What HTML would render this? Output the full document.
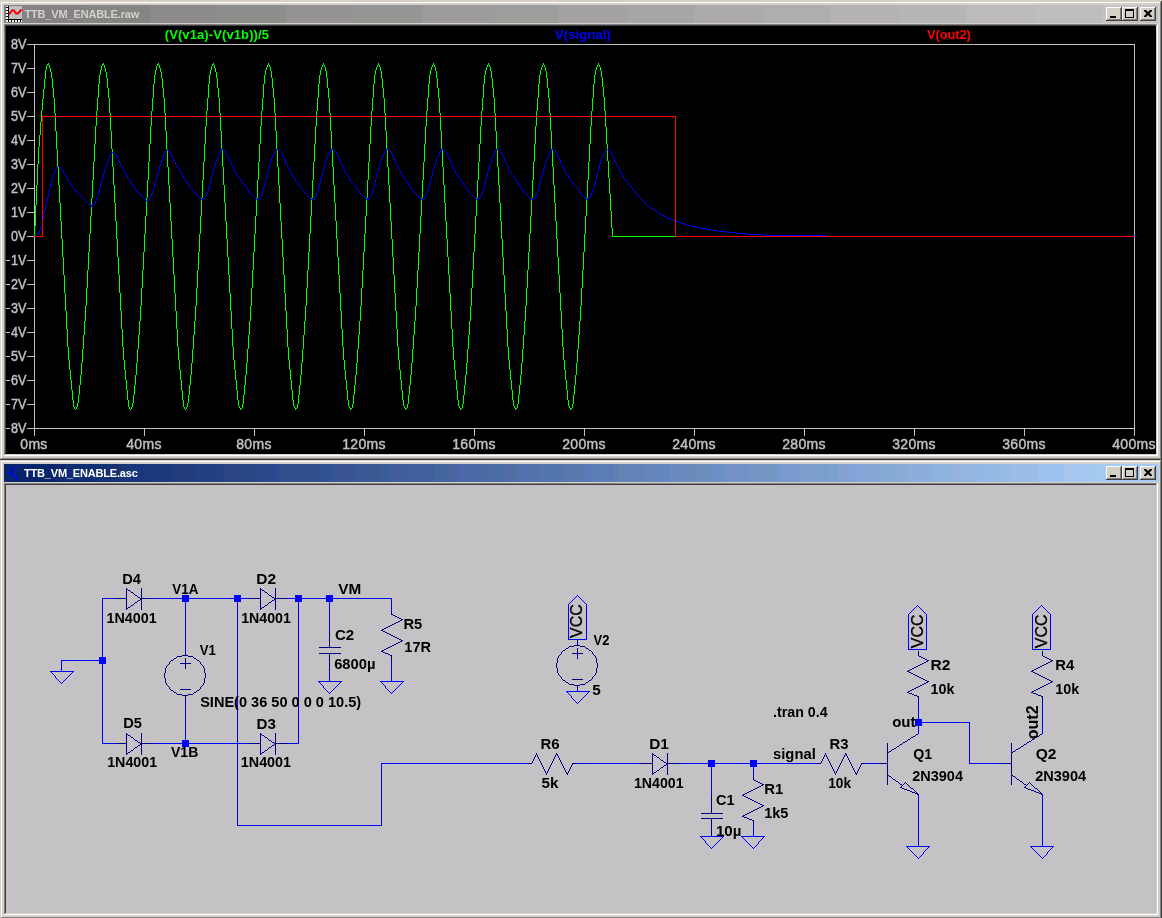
<!DOCTYPE html><html><head><meta charset="utf-8"><title>LTspice</title><style>
*{margin:0;padding:0}
html,body{width:1162px;height:918px;overflow:hidden;background:#d4d0c8;font-family:"Liberation Sans",sans-serif}
.abs{position:absolute}
svg{position:absolute;left:0;top:0;will-change:transform}
</style></head><body>
<svg width="1162" height="918" viewBox="0 0 1162 918">
<defs><linearGradient id="gin" x1="0" x2="1" y1="0" y2="0"><stop offset="0" stop-color="#808080"/><stop offset="1" stop-color="#c0c0c0"/></linearGradient><linearGradient id="gac" x1="0" x2="1" y1="0" y2="0"><stop offset="0" stop-color="#0a246a"/><stop offset="1" stop-color="#a6caf0"/></linearGradient><clipPath id="pc"><rect x="6" y="26" width="1150" height="428"/></clipPath></defs>
<rect x="0" y="1" width="1162" height="459" fill="#d4d0c8"/>
<rect x="1" y="2" width="1160" height="1" fill="#ffffff"/>
<rect x="1" y="2" width="1" height="457" fill="#ffffff"/>
<rect x="1" y="458" width="1160" height="1" fill="#808080"/>
<rect x="1160" y="2" width="1" height="457" fill="#808080"/>
<rect x="0" y="459" width="1162" height="1" fill="#404040"/>
<rect x="1161" y="1" width="1" height="459" fill="#404040"/>
<rect x="4" y="5" width="78" height="18" fill="#848284"/>
<rect x="82" y="5" width="68" height="18" fill="#848684"/>
<rect x="150" y="5" width="68" height="18" fill="#8c8a8c"/>
<rect x="218" y="5" width="68" height="18" fill="#8c8e8c"/>
<rect x="286" y="5" width="68" height="18" fill="#949294"/>
<rect x="354" y="5" width="68" height="18" fill="#949694"/>
<rect x="422" y="5" width="68" height="18" fill="#9c9a9c"/>
<rect x="490" y="5" width="68" height="18" fill="#9c9e9c"/>
<rect x="558" y="5" width="69" height="18" fill="#a5a2a5"/>
<rect x="627" y="5" width="68" height="18" fill="#a5a6a5"/>
<rect x="695" y="5" width="68" height="18" fill="#adaaad"/>
<rect x="763" y="5" width="68" height="18" fill="#adaead"/>
<rect x="831" y="5" width="68" height="18" fill="#b5b2b5"/>
<rect x="899" y="5" width="68" height="18" fill="#b5b6b5"/>
<rect x="967" y="5" width="68" height="18" fill="#bdbabd"/>
<rect x="1035" y="5" width="68" height="18" fill="#bdbebd"/>
<rect x="1103" y="5" width="55" height="18" fill="#c5c2c5"/>
<rect x="6" y="6" width="16" height="16" fill="#c0c0c0"/>
<rect x="6" y="6" width="2" height="14" fill="#ffffff"/>
<rect x="6" y="7" width="2" height="1" fill="#000"/>
<rect x="6" y="10" width="2" height="1" fill="#000"/>
<rect x="6" y="13" width="2" height="1" fill="#000"/>
<rect x="6" y="16" width="2" height="1" fill="#000"/>
<rect x="6" y="19" width="2" height="1" fill="#000"/>
<rect x="8" y="6" width="1" height="16" fill="#000"/>
<rect x="6" y="19" width="16" height="1" fill="#000"/>
<rect x="6" y="20" width="16" height="2" fill="#ffffff"/>
<rect x="8" y="20" width="1" height="2" fill="#000"/>
<rect x="11" y="20" width="1" height="2" fill="#000"/>
<rect x="14" y="20" width="1" height="2" fill="#000"/>
<rect x="17" y="20" width="1" height="2" fill="#000"/>
<rect x="20" y="20" width="1" height="2" fill="#000"/>
<polyline points="9,14.5 12,10.5 14,10.5 16,13.5 18,13.5 21.5,9.5" fill="none" stroke="#ff0000" stroke-width="2"/>
<text x="24.4" y="18" font-family="Liberation Sans" font-weight="bold" font-size="11" fill="#d4d0c8" textLength="114.9" lengthAdjust="spacing">TTB_VM_ENABLE.raw</text>
<rect x="1106" y="7" width="16" height="14" fill="#404040"/>
<rect x="1106" y="7" width="15" height="13" fill="#ffffff"/>
<rect x="1107" y="8" width="14" height="12" fill="#808080"/>
<rect x="1107" y="8" width="13" height="11" fill="#d4d0c8"/>
<rect x="1110" y="16" width="6" height="2" fill="#000"/>
<rect x="1122" y="7" width="16" height="14" fill="#404040"/>
<rect x="1122" y="7" width="15" height="13" fill="#ffffff"/>
<rect x="1123" y="8" width="14" height="12" fill="#808080"/>
<rect x="1123" y="8" width="13" height="11" fill="#d4d0c8"/>
<rect x="1125" y="9" width="9" height="9" fill="#000"/>
<rect x="1126" y="11" width="7" height="6" fill="#d4d0c8"/>
<rect x="1140" y="7" width="16" height="14" fill="#404040"/>
<rect x="1140" y="7" width="15" height="13" fill="#ffffff"/>
<rect x="1141" y="8" width="14" height="12" fill="#808080"/>
<rect x="1141" y="8" width="13" height="11" fill="#d4d0c8"/>
<path d="M1144 10h2l2 2l2 -2h2v1l-2.5 2.5l2.5 2.5v1h-2l-2 -2l-2 2h-2v-1l2.5 -2.5l-2.5 -2.5z" fill="#000"/>
<rect x="4" y="24" width="1154" height="432" fill="#ffffff"/>
<rect x="4" y="24" width="1153" height="431" fill="#808080"/>
<rect x="5" y="25" width="1152" height="430" fill="#d4d0c8"/>
<rect x="5" y="25" width="1151" height="429" fill="#404040"/>
<rect x="6" y="26" width="1150" height="428" fill="#000000"/>
<rect x="0" y="460" width="1162" height="459" fill="#d4d0c8"/>
<rect x="1" y="461" width="1160" height="1" fill="#ffffff"/>
<rect x="1" y="461" width="1" height="457" fill="#ffffff"/>
<rect x="1" y="917" width="1160" height="1" fill="#808080"/>
<rect x="1160" y="461" width="1" height="457" fill="#808080"/>
<rect x="0" y="918" width="1162" height="1" fill="#404040"/>
<rect x="1161" y="460" width="1" height="459" fill="#404040"/>
<rect x="4" y="464" width="36" height="18" fill="#08246b"/>
<rect x="40" y="464" width="15" height="18" fill="#08286b"/>
<rect x="55" y="464" width="7" height="18" fill="#10286b"/>
<rect x="62" y="464" width="4" height="18" fill="#102873"/>
<rect x="66" y="464" width="26" height="18" fill="#102d73"/>
<rect x="92" y="464" width="19" height="18" fill="#103173"/>
<rect x="111" y="464" width="8" height="18" fill="#193173"/>
<rect x="119" y="464" width="8" height="18" fill="#193573"/>
<rect x="127" y="464" width="18" height="18" fill="#19357b"/>
<rect x="145" y="464" width="22" height="18" fill="#19397b"/>
<rect x="167" y="464" width="4" height="18" fill="#21397b"/>
<rect x="171" y="464" width="21" height="18" fill="#213d7b"/>
<rect x="192" y="464" width="5" height="18" fill="#213d84"/>
<rect x="197" y="464" width="26" height="18" fill="#214184"/>
<rect x="223" y="464" width="1" height="18" fill="#294184"/>
<rect x="224" y="464" width="26" height="18" fill="#294584"/>
<rect x="250" y="464" width="8" height="18" fill="#294984"/>
<rect x="258" y="464" width="18" height="18" fill="#29498c"/>
<rect x="276" y="464" width="3" height="18" fill="#294d8c"/>
<rect x="279" y="464" width="23" height="18" fill="#314d8c"/>
<rect x="302" y="464" width="21" height="18" fill="#31518c"/>
<rect x="323" y="464" width="6" height="18" fill="#315194"/>
<rect x="329" y="464" width="6" height="18" fill="#315594"/>
<rect x="335" y="464" width="20" height="18" fill="#3a5594"/>
<rect x="355" y="464" width="26" height="18" fill="#3a5994"/>
<rect x="381" y="464" width="7" height="18" fill="#3a5d94"/>
<rect x="388" y="464" width="3" height="18" fill="#3a5d9c"/>
<rect x="391" y="464" width="16" height="18" fill="#425d9c"/>
<rect x="407" y="464" width="27" height="18" fill="#42619c"/>
<rect x="434" y="464" width="13" height="18" fill="#42659c"/>
<rect x="447" y="464" width="6" height="18" fill="#4a659c"/>
<rect x="453" y="464" width="7" height="18" fill="#4a65a5"/>
<rect x="460" y="464" width="26" height="18" fill="#4a69a5"/>
<rect x="486" y="464" width="17" height="18" fill="#4a6da5"/>
<rect x="503" y="464" width="10" height="18" fill="#526da5"/>
<rect x="513" y="464" width="5" height="18" fill="#5271a5"/>
<rect x="518" y="464" width="21" height="18" fill="#5271ad"/>
<rect x="539" y="464" width="19" height="18" fill="#5275ad"/>
<rect x="558" y="464" width="7" height="18" fill="#5a75ad"/>
<rect x="565" y="464" width="18" height="18" fill="#5a79ad"/>
<rect x="583" y="464" width="8" height="18" fill="#5a79b5"/>
<rect x="591" y="464" width="23" height="18" fill="#5a7db5"/>
<rect x="614" y="464" width="4" height="18" fill="#637db5"/>
<rect x="618" y="464" width="26" height="18" fill="#6382b5"/>
<rect x="644" y="464" width="4" height="18" fill="#6386b5"/>
<rect x="648" y="464" width="22" height="18" fill="#6386bd"/>
<rect x="670" y="464" width="26" height="18" fill="#6b8abd"/>
<rect x="696" y="464" width="17" height="18" fill="#6b8ebd"/>
<rect x="713" y="464" width="10" height="18" fill="#6b8ec5"/>
<rect x="723" y="464" width="3" height="18" fill="#6b92c5"/>
<rect x="726" y="464" width="23" height="18" fill="#7392c5"/>
<rect x="749" y="464" width="26" height="18" fill="#7396c5"/>
<rect x="775" y="464" width="3" height="18" fill="#739ac5"/>
<rect x="778" y="464" width="4" height="18" fill="#739ace"/>
<rect x="782" y="464" width="19" height="18" fill="#7b9ace"/>
<rect x="801" y="464" width="27" height="18" fill="#7b9ece"/>
<rect x="828" y="464" width="10" height="18" fill="#7ba2ce"/>
<rect x="838" y="464" width="5" height="18" fill="#84a2ce"/>
<rect x="843" y="464" width="11" height="18" fill="#84a2d6"/>
<rect x="854" y="464" width="26" height="18" fill="#84a6d6"/>
<rect x="880" y="464" width="14" height="18" fill="#84aad6"/>
<rect x="894" y="464" width="13" height="18" fill="#8caad6"/>
<rect x="907" y="464" width="1" height="18" fill="#8caed6"/>
<rect x="908" y="464" width="25" height="18" fill="#8caede"/>
<rect x="933" y="464" width="17" height="18" fill="#8cb2de"/>
<rect x="950" y="464" width="9" height="18" fill="#94b2de"/>
<rect x="959" y="464" width="14" height="18" fill="#94b6de"/>
<rect x="973" y="464" width="12" height="18" fill="#94b6e6"/>
<rect x="985" y="464" width="21" height="18" fill="#94bae6"/>
<rect x="1006" y="464" width="6" height="18" fill="#9cbae6"/>
<rect x="1012" y="464" width="26" height="18" fill="#9cbee6"/>
<rect x="1038" y="464" width="24" height="18" fill="#9cc2ef"/>
<rect x="1062" y="464" width="2" height="18" fill="#a5c2ef"/>
<rect x="1064" y="464" width="26" height="18" fill="#a5c6ef"/>
<rect x="1090" y="464" width="13" height="18" fill="#a5caef"/>
<rect x="1103" y="464" width="55" height="18" fill="#a5caf7"/>
<rect x="11" y="468" width="2" height="9" fill="#0000ff"/>
<rect x="8" y="472" width="3" height="1" fill="#0000ff"/>
<rect x="13" y="469" width="1" height="1" fill="#0000ff"/>
<rect x="14" y="468" width="1" height="1" fill="#0000ff"/>
<rect x="15" y="467" width="1" height="1" fill="#0000ff"/>
<rect x="16" y="466" width="1" height="1" fill="#0000ff"/>
<rect x="17" y="465" width="1" height="1" fill="#0000ff"/>
<rect x="13" y="475" width="1" height="1" fill="#0000ff"/>
<rect x="14" y="476" width="1" height="1" fill="#0000ff"/>
<rect x="15" y="477" width="1" height="1" fill="#0000ff"/>
<rect x="16" y="478" width="1" height="1" fill="#0000ff"/>
<rect x="17" y="479" width="1" height="1" fill="#0000ff"/>
<rect x="18" y="480" width="1" height="1" fill="#0000ff"/>
<rect x="16" y="477" width="2" height="2" fill="#0000ff"/>
<rect x="15" y="478" width="3" height="1" fill="#0000ff"/>
<rect x="17" y="476" width="1" height="3" fill="#0000ff"/>
<text x="24" y="477" font-family="Liberation Sans" font-weight="bold" font-size="11" fill="#ffffff" textLength="113.8" lengthAdjust="spacing">TTB_VM_ENABLE.asc</text>
<rect x="1106" y="466" width="16" height="14" fill="#404040"/>
<rect x="1106" y="466" width="15" height="13" fill="#ffffff"/>
<rect x="1107" y="467" width="14" height="12" fill="#808080"/>
<rect x="1107" y="467" width="13" height="11" fill="#d4d0c8"/>
<rect x="1110" y="475" width="6" height="2" fill="#000"/>
<rect x="1122" y="466" width="16" height="14" fill="#404040"/>
<rect x="1122" y="466" width="15" height="13" fill="#ffffff"/>
<rect x="1123" y="467" width="14" height="12" fill="#808080"/>
<rect x="1123" y="467" width="13" height="11" fill="#d4d0c8"/>
<rect x="1125" y="468" width="9" height="9" fill="#000"/>
<rect x="1126" y="470" width="7" height="6" fill="#d4d0c8"/>
<rect x="1140" y="466" width="16" height="14" fill="#404040"/>
<rect x="1140" y="466" width="15" height="13" fill="#ffffff"/>
<rect x="1141" y="467" width="14" height="12" fill="#808080"/>
<rect x="1141" y="467" width="13" height="11" fill="#d4d0c8"/>
<path d="M1144 469h2l2 2l2 -2h2v1l-2.5 2.5l2.5 2.5v1h-2l-2 -2l-2 2h-2v-1l2.5 -2.5l-2.5 -2.5z" fill="#000"/>
<rect x="4" y="483" width="1154" height="432" fill="#ffffff"/>
<rect x="4" y="483" width="1153" height="431" fill="#808080"/>
<rect x="5" y="484" width="1152" height="430" fill="#d4d0c8"/>
<rect x="5" y="484" width="1151" height="429" fill="#404040"/>
<rect x="6" y="485" width="1150" height="428" fill="#c5c2c5"/>
<g clip-path="url(#pc)">
<g shape-rendering="crispEdges" stroke="#c0c0c0" stroke-width="1" fill="none">
<path d="M27 44.5H1134.5V428.5H27M34.5 44V436"/>
<path d="M27 428.5H34"/>
<path d="M27 404.5H34"/>
<path d="M27 380.5H34"/>
<path d="M27 356.5H34"/>
<path d="M27 332.5H34"/>
<path d="M27 308.5H34"/>
<path d="M27 284.5H34"/>
<path d="M27 260.5H34"/>
<path d="M27 236.5H34"/>
<path d="M27 212.5H34"/>
<path d="M27 188.5H34"/>
<path d="M27 164.5H34"/>
<path d="M27 140.5H34"/>
<path d="M27 116.5H34"/>
<path d="M27 92.5H34"/>
<path d="M27 68.5H34"/>
<path d="M27 44.5H34"/>
<path d="M34.5 428V436"/>
<path d="M144.5 428V436"/>
<path d="M254.5 428V436"/>
<path d="M364.5 428V436"/>
<path d="M474.5 428V436"/>
<path d="M584.5 428V436"/>
<path d="M694.5 428V436"/>
<path d="M804.5 428V436"/>
<path d="M914.5 428V436"/>
<path d="M1024.5 428V436"/>
<path d="M1134.5 428V436"/>
</g>
<g font-family="Liberation Sans" font-size="14" fill="#c0c0c0" stroke="#c0c0c0" stroke-width="0.45">
<text x="26.3" y="433" text-anchor="end" textLength="15.4" lengthAdjust="spacingAndGlyphs">8V</text>
<rect x="6" y="428" width="4" height="1" stroke="none"/>
<text x="26.3" y="409" text-anchor="end" textLength="15.4" lengthAdjust="spacingAndGlyphs">7V</text>
<rect x="6" y="404" width="4" height="1" stroke="none"/>
<text x="26.3" y="385" text-anchor="end" textLength="15.4" lengthAdjust="spacingAndGlyphs">6V</text>
<rect x="6" y="380" width="4" height="1" stroke="none"/>
<text x="26.3" y="361" text-anchor="end" textLength="15.4" lengthAdjust="spacingAndGlyphs">5V</text>
<rect x="6" y="356" width="4" height="1" stroke="none"/>
<text x="26.3" y="337" text-anchor="end" textLength="15.4" lengthAdjust="spacingAndGlyphs">4V</text>
<rect x="6" y="332" width="4" height="1" stroke="none"/>
<text x="26.3" y="313" text-anchor="end" textLength="15.4" lengthAdjust="spacingAndGlyphs">3V</text>
<rect x="6" y="308" width="4" height="1" stroke="none"/>
<text x="26.3" y="289" text-anchor="end" textLength="15.4" lengthAdjust="spacingAndGlyphs">2V</text>
<rect x="6" y="284" width="4" height="1" stroke="none"/>
<text x="26.3" y="265" text-anchor="end" textLength="15.4" lengthAdjust="spacingAndGlyphs">1V</text>
<rect x="6" y="260" width="4" height="1" stroke="none"/>
<text x="26.3" y="241" text-anchor="end" textLength="15.4" lengthAdjust="spacingAndGlyphs">0V</text>
<text x="26.3" y="217" text-anchor="end" textLength="15.4" lengthAdjust="spacingAndGlyphs">1V</text>
<text x="26.3" y="193" text-anchor="end" textLength="15.4" lengthAdjust="spacingAndGlyphs">2V</text>
<text x="26.3" y="169" text-anchor="end" textLength="15.4" lengthAdjust="spacingAndGlyphs">3V</text>
<text x="26.3" y="145" text-anchor="end" textLength="15.4" lengthAdjust="spacingAndGlyphs">4V</text>
<text x="26.3" y="121" text-anchor="end" textLength="15.4" lengthAdjust="spacingAndGlyphs">5V</text>
<text x="26.3" y="97" text-anchor="end" textLength="15.4" lengthAdjust="spacingAndGlyphs">6V</text>
<text x="26.3" y="73" text-anchor="end" textLength="15.4" lengthAdjust="spacingAndGlyphs">7V</text>
<text x="26.3" y="49" text-anchor="end" textLength="15.4" lengthAdjust="spacingAndGlyphs">8V</text>
<text x="34" y="449" text-anchor="middle" letter-spacing="0.3">0ms</text>
<text x="144" y="449" text-anchor="middle" letter-spacing="0.3">40ms</text>
<text x="254" y="449" text-anchor="middle" letter-spacing="0.3">80ms</text>
<text x="364" y="449" text-anchor="middle" letter-spacing="0.3">120ms</text>
<text x="474" y="449" text-anchor="middle" letter-spacing="0.3">160ms</text>
<text x="584" y="449" text-anchor="middle" letter-spacing="0.3">200ms</text>
<text x="694" y="449" text-anchor="middle" letter-spacing="0.3">240ms</text>
<text x="804" y="449" text-anchor="middle" letter-spacing="0.3">280ms</text>
<text x="914" y="449" text-anchor="middle" letter-spacing="0.3">320ms</text>
<text x="1024" y="449" text-anchor="middle" letter-spacing="0.3">360ms</text>
<text x="1134" y="449" text-anchor="middle" letter-spacing="0.3">400ms</text>
</g>
<g font-family="Liberation Sans" font-size="13" font-weight="bold">
<text x="164.7" y="39" fill="#00ff00" textLength="104.3" lengthAdjust="spacing">(V(v1a)-V(v1b))/5</text>
<text x="555" y="39" fill="#0000ff" textLength="55.9" lengthAdjust="spacing">V(signal)</text>
<text x="927" y="39" fill="#ff0000" textLength="43.8" lengthAdjust="spacing">V(out2)</text>
</g>
<g fill="none" stroke-width="1" shape-rendering="crispEdges">
<path fill="#00ff00" stroke="none" d="M34 226h1v11h-1zM35 205h1v21h-1zM36 185h1v20h-1zM37 164h1v21h-1zM38 147h1v17h-1zM39 135h1v12h-1zM40 122h1v13h-1zM41 110h1v12h-1zM42 99h1v11h-1zM43 89h1v10h-1zM44 79h1v10h-1zM45 70h1v9h-1zM46 66h1v4h-1zM47 64h1v2h-1zM48 63h1v2h-1zM49 65h1v3h-1zM50 68h1v4h-1zM51 72h1v6h-1zM52 78h1v10h-1zM53 88h1v10h-1zM54 98h1v15h-1zM55 113h1v18h-1zM56 131h1v18h-1zM57 149h1v18h-1zM58 167h1v18h-1zM59 185h1v18h-1zM60 203h1v18h-1zM61 221h1v18h-1zM62 239h1v18h-1zM63 257h1v18h-1zM64 275h1v18h-1zM65 293h1v18h-1zM66 311h1v18h-1zM67 329h1v18h-1zM68 347h1v13h-1zM69 360h1v10h-1zM70 370h1v10h-1zM71 380h1v10h-1zM72 390h1v10h-1zM73 400h1v7h-1zM74 407h1v2h-1zM75 409h1v1h-1zM76 407h1v2h-1zM77 403h1v4h-1zM78 395h1v8h-1zM79 385h1v10h-1zM80 375h1v10h-1zM81 363h1v12h-1zM82 349h1v14h-1zM83 335h1v14h-1zM84 321h1v14h-1zM85 306h1v15h-1zM86 288h1v18h-1zM87 270h1v18h-1zM88 252h1v18h-1zM89 234h1v18h-1zM90 216h1v18h-1zM91 198h1v18h-1zM92 180h1v18h-1zM93 162h1v18h-1zM94 144h1v18h-1zM95 126h1v18h-1zM96 111h1v15h-1zM97 98h1v13h-1zM98 84h1v14h-1zM99 75h1v9h-1zM100 70h1v5h-1zM101 66h1v4h-1zM102 64h1v2h-1zM103 63h1v2h-1zM104 65h1v3h-1zM105 68h1v4h-1zM106 72h1v6h-1zM107 78h1v10h-1zM108 88h1v10h-1zM109 98h1v15h-1zM110 113h1v18h-1zM111 131h1v18h-1zM112 149h1v18h-1zM113 167h1v18h-1zM114 185h1v18h-1zM115 203h1v18h-1zM116 221h1v18h-1zM117 239h1v18h-1zM118 257h1v18h-1zM119 275h1v18h-1zM120 293h1v18h-1zM121 311h1v18h-1zM122 329h1v18h-1zM123 347h1v13h-1zM124 360h1v10h-1zM125 370h1v10h-1zM126 380h1v10h-1zM127 390h1v10h-1zM128 400h1v7h-1zM129 407h1v2h-1zM130 409h1v1h-1zM131 407h1v2h-1zM132 403h1v4h-1zM133 395h1v8h-1zM134 385h1v10h-1zM135 375h1v10h-1zM136 363h1v12h-1zM137 349h1v14h-1zM138 335h1v14h-1zM139 321h1v14h-1zM140 306h1v15h-1zM141 288h1v18h-1zM142 270h1v18h-1zM143 252h1v18h-1zM144 234h1v18h-1zM145 216h1v18h-1zM146 198h1v18h-1zM147 180h1v18h-1zM148 162h1v18h-1zM149 144h1v18h-1zM150 126h1v18h-1zM151 111h1v15h-1zM152 98h1v13h-1zM153 84h1v14h-1zM154 75h1v9h-1zM155 70h1v5h-1zM156 66h1v4h-1zM157 64h1v2h-1zM158 63h1v2h-1zM159 65h1v3h-1zM160 68h1v4h-1zM161 72h1v6h-1zM162 78h1v10h-1zM163 88h1v10h-1zM164 98h1v15h-1zM165 113h1v18h-1zM166 131h1v18h-1zM167 149h1v18h-1zM168 167h1v18h-1zM169 185h1v18h-1zM170 203h1v18h-1zM171 221h1v18h-1zM172 239h1v18h-1zM173 257h1v18h-1zM174 275h1v18h-1zM175 293h1v18h-1zM176 311h1v18h-1zM177 329h1v18h-1zM178 347h1v13h-1zM179 360h1v10h-1zM180 370h1v10h-1zM181 380h1v10h-1zM182 390h1v10h-1zM183 400h1v7h-1zM184 407h1v2h-1zM185 409h1v1h-1zM186 407h1v2h-1zM187 403h1v4h-1zM188 395h1v8h-1zM189 385h1v10h-1zM190 375h1v10h-1zM191 363h1v12h-1zM192 349h1v14h-1zM193 335h1v14h-1zM194 321h1v14h-1zM195 306h1v15h-1zM196 288h1v18h-1zM197 270h1v18h-1zM198 252h1v18h-1zM199 234h1v18h-1zM200 216h1v18h-1zM201 198h1v18h-1zM202 180h1v18h-1zM203 162h1v18h-1zM204 144h1v18h-1zM205 126h1v18h-1zM206 111h1v15h-1zM207 98h1v13h-1zM208 84h1v14h-1zM209 75h1v9h-1zM210 70h1v5h-1zM211 66h1v4h-1zM212 64h1v2h-1zM213 63h1v2h-1zM214 65h1v3h-1zM215 68h1v4h-1zM216 72h1v6h-1zM217 78h1v10h-1zM218 88h1v10h-1zM219 98h1v15h-1zM220 113h1v18h-1zM221 131h1v18h-1zM222 149h1v18h-1zM223 167h1v18h-1zM224 185h1v18h-1zM225 203h1v18h-1zM226 221h1v18h-1zM227 239h1v18h-1zM228 257h1v18h-1zM229 275h1v18h-1zM230 293h1v18h-1zM231 311h1v18h-1zM232 329h1v18h-1zM233 347h1v13h-1zM234 360h1v10h-1zM235 370h1v10h-1zM236 380h1v10h-1zM237 390h1v10h-1zM238 400h1v6h-1zM239 406h1v2h-1zM240 408h1v2h-1zM241 408h1v1h-1zM242 404h1v4h-1zM243 395h1v9h-1zM244 385h1v10h-1zM245 375h1v10h-1zM246 363h1v12h-1zM247 349h1v14h-1zM248 335h1v14h-1zM249 321h1v14h-1zM250 306h1v15h-1zM251 288h1v18h-1zM252 270h1v18h-1zM253 252h1v18h-1zM254 234h1v18h-1zM255 216h1v18h-1zM256 198h1v18h-1zM257 180h1v18h-1zM258 162h1v18h-1zM259 144h1v18h-1zM260 126h1v18h-1zM261 111h1v15h-1zM262 98h1v13h-1zM263 84h1v14h-1zM264 75h1v9h-1zM265 70h1v5h-1zM266 67h1v3h-1zM267 65h1v2h-1zM268 63h1v2h-1zM269 65h1v2h-1zM270 67h1v4h-1zM271 71h1v7h-1zM272 78h1v10h-1zM273 88h1v10h-1zM274 98h1v15h-1zM275 113h1v18h-1zM276 131h1v18h-1zM277 149h1v18h-1zM278 167h1v18h-1zM279 185h1v18h-1zM280 203h1v18h-1zM281 221h1v18h-1zM282 239h1v18h-1zM283 257h1v18h-1zM284 275h1v18h-1zM285 293h1v18h-1zM286 311h1v18h-1zM287 329h1v18h-1zM288 347h1v13h-1zM289 360h1v10h-1zM290 370h1v10h-1zM291 380h1v10h-1zM292 390h1v10h-1zM293 400h1v6h-1zM294 406h1v2h-1zM295 408h1v2h-1zM296 408h1v1h-1zM297 404h1v4h-1zM298 395h1v9h-1zM299 385h1v10h-1zM300 375h1v10h-1zM301 363h1v12h-1zM302 349h1v14h-1zM303 335h1v14h-1zM304 321h1v14h-1zM305 306h1v15h-1zM306 288h1v18h-1zM307 270h1v18h-1zM308 252h1v18h-1zM309 234h1v18h-1zM310 216h1v18h-1zM311 198h1v18h-1zM312 180h1v18h-1zM313 162h1v18h-1zM314 144h1v18h-1zM315 126h1v18h-1zM316 111h1v15h-1zM317 98h1v13h-1zM318 84h1v14h-1zM319 75h1v9h-1zM320 70h1v5h-1zM321 67h1v3h-1zM322 65h1v2h-1zM323 63h1v2h-1zM324 65h1v2h-1zM325 67h1v4h-1zM326 71h1v7h-1zM327 78h1v10h-1zM328 88h1v10h-1zM329 98h1v15h-1zM330 113h1v18h-1zM331 131h1v18h-1zM332 149h1v18h-1zM333 167h1v18h-1zM334 185h1v18h-1zM335 203h1v18h-1zM336 221h1v18h-1zM337 239h1v18h-1zM338 257h1v18h-1zM339 275h1v18h-1zM340 293h1v18h-1zM341 311h1v18h-1zM342 329h1v18h-1zM343 347h1v13h-1zM344 360h1v10h-1zM345 370h1v10h-1zM346 380h1v10h-1zM347 390h1v10h-1zM348 400h1v6h-1zM349 406h1v2h-1zM350 408h1v2h-1zM351 408h1v1h-1zM352 404h1v4h-1zM353 395h1v9h-1zM354 385h1v10h-1zM355 375h1v10h-1zM356 363h1v12h-1zM357 349h1v14h-1zM358 335h1v14h-1zM359 321h1v14h-1zM360 306h1v15h-1zM361 288h1v18h-1zM362 270h1v18h-1zM363 252h1v18h-1zM364 234h1v18h-1zM365 216h1v18h-1zM366 198h1v18h-1zM367 180h1v18h-1zM368 162h1v18h-1zM369 144h1v18h-1zM370 126h1v18h-1zM371 111h1v15h-1zM372 98h1v13h-1zM373 84h1v14h-1zM374 75h1v9h-1zM375 70h1v5h-1zM376 67h1v3h-1zM377 65h1v2h-1zM378 63h1v2h-1zM379 65h1v2h-1zM380 67h1v4h-1zM381 71h1v7h-1zM382 78h1v10h-1zM383 88h1v10h-1zM384 98h1v15h-1zM385 113h1v18h-1zM386 131h1v18h-1zM387 149h1v18h-1zM388 167h1v18h-1zM389 185h1v18h-1zM390 203h1v18h-1zM391 221h1v18h-1zM392 239h1v18h-1zM393 257h1v18h-1zM394 275h1v18h-1zM395 293h1v18h-1zM396 311h1v18h-1zM397 329h1v18h-1zM398 347h1v13h-1zM399 360h1v10h-1zM400 370h1v10h-1zM401 380h1v10h-1zM402 390h1v10h-1zM403 400h1v6h-1zM404 406h1v2h-1zM405 408h1v2h-1zM406 408h1v1h-1zM407 404h1v4h-1zM408 395h1v9h-1zM409 385h1v10h-1zM410 375h1v10h-1zM411 363h1v12h-1zM412 349h1v14h-1zM413 335h1v14h-1zM414 321h1v14h-1zM415 306h1v15h-1zM416 288h1v18h-1zM417 270h1v18h-1zM418 252h1v18h-1zM419 234h1v18h-1zM420 216h1v18h-1zM421 198h1v18h-1zM422 180h1v18h-1zM423 162h1v18h-1zM424 144h1v18h-1zM425 126h1v18h-1zM426 111h1v15h-1zM427 98h1v13h-1zM428 84h1v14h-1zM429 75h1v9h-1zM430 70h1v5h-1zM431 67h1v3h-1zM432 65h1v2h-1zM433 63h1v2h-1zM434 65h1v2h-1zM435 67h1v4h-1zM436 71h1v7h-1zM437 78h1v10h-1zM438 88h1v10h-1zM439 98h1v15h-1zM440 113h1v18h-1zM441 131h1v18h-1zM442 149h1v18h-1zM443 167h1v18h-1zM444 185h1v18h-1zM445 203h1v18h-1zM446 221h1v18h-1zM447 239h1v18h-1zM448 257h1v18h-1zM449 275h1v18h-1zM450 293h1v18h-1zM451 311h1v18h-1zM452 329h1v18h-1zM453 347h1v13h-1zM454 360h1v10h-1zM455 370h1v10h-1zM456 380h1v10h-1zM457 390h1v10h-1zM458 400h1v6h-1zM459 406h1v2h-1zM460 408h1v2h-1zM461 408h1v1h-1zM462 404h1v4h-1zM463 395h1v9h-1zM464 385h1v10h-1zM465 375h1v10h-1zM466 363h1v12h-1zM467 349h1v14h-1zM468 335h1v14h-1zM469 321h1v14h-1zM470 306h1v15h-1zM471 288h1v18h-1zM472 270h1v18h-1zM473 252h1v18h-1zM474 234h1v18h-1zM475 216h1v18h-1zM476 198h1v18h-1zM477 180h1v18h-1zM478 162h1v18h-1zM479 144h1v18h-1zM480 126h1v18h-1zM481 111h1v15h-1zM482 98h1v13h-1zM483 84h1v14h-1zM484 75h1v9h-1zM485 70h1v5h-1zM486 67h1v3h-1zM487 65h1v2h-1zM488 63h1v2h-1zM489 65h1v2h-1zM490 67h1v4h-1zM491 71h1v7h-1zM492 78h1v10h-1zM493 88h1v10h-1zM494 98h1v15h-1zM495 113h1v18h-1zM496 131h1v18h-1zM497 149h1v18h-1zM498 167h1v18h-1zM499 185h1v18h-1zM500 203h1v18h-1zM501 221h1v18h-1zM502 239h1v18h-1zM503 257h1v18h-1zM504 275h1v18h-1zM505 293h1v18h-1zM506 311h1v18h-1zM507 329h1v18h-1zM508 347h1v13h-1zM509 360h1v10h-1zM510 370h1v10h-1zM511 380h1v10h-1zM512 390h1v10h-1zM513 400h1v6h-1zM514 406h1v2h-1zM515 408h1v2h-1zM516 408h1v1h-1zM517 404h1v4h-1zM518 395h1v9h-1zM519 385h1v10h-1zM520 375h1v10h-1zM521 363h1v12h-1zM522 349h1v14h-1zM523 335h1v14h-1zM524 321h1v14h-1zM525 306h1v15h-1zM526 288h1v18h-1zM527 270h1v18h-1zM528 252h1v18h-1zM529 234h1v18h-1zM530 216h1v18h-1zM531 198h1v18h-1zM532 180h1v18h-1zM533 162h1v18h-1zM534 144h1v18h-1zM535 126h1v18h-1zM536 111h1v15h-1zM537 98h1v13h-1zM538 84h1v14h-1zM539 75h1v9h-1zM540 70h1v5h-1zM541 67h1v3h-1zM542 65h1v2h-1zM543 63h1v2h-1zM544 65h1v2h-1zM545 67h1v4h-1zM546 71h1v7h-1zM547 78h1v10h-1zM548 88h1v10h-1zM549 98h1v15h-1zM550 113h1v18h-1zM551 131h1v18h-1zM552 149h1v18h-1zM553 167h1v18h-1zM554 185h1v18h-1zM555 203h1v18h-1zM556 221h1v18h-1zM557 239h1v18h-1zM558 257h1v18h-1zM559 275h1v18h-1zM560 293h1v18h-1zM561 311h1v18h-1zM562 329h1v18h-1zM563 347h1v13h-1zM564 360h1v10h-1zM565 370h1v10h-1zM566 380h1v10h-1zM567 390h1v10h-1zM568 400h1v6h-1zM569 406h1v2h-1zM570 408h1v2h-1zM571 408h1v1h-1zM572 404h1v4h-1zM573 395h1v9h-1zM574 385h1v10h-1zM575 375h1v10h-1zM576 363h1v12h-1zM577 349h1v14h-1zM578 335h1v14h-1zM579 321h1v14h-1zM580 306h1v15h-1zM581 288h1v18h-1zM582 270h1v18h-1zM583 252h1v18h-1zM584 234h1v18h-1zM585 216h1v18h-1zM586 198h1v18h-1zM587 180h1v18h-1zM588 162h1v18h-1zM589 144h1v18h-1zM590 126h1v18h-1zM591 111h1v15h-1zM592 98h1v13h-1zM593 84h1v14h-1zM594 75h1v9h-1zM595 70h1v5h-1zM596 67h1v3h-1zM597 65h1v2h-1zM598 63h1v2h-1zM599 65h1v2h-1zM600 67h1v4h-1zM601 71h1v6h-1zM602 77h1v10h-1zM603 87h1v10h-1zM604 97h1v14h-1zM605 111h1v16h-1zM606 127h1v17h-1zM607 144h1v17h-1zM608 161h1v17h-1zM609 178h1v16h-1zM610 194h1v17h-1zM611 211h1v17h-1zM612 228h1v9h-1zM613 236h1v1h-1zM614 236h1v1h-1zM615 236h1v1h-1zM616 236h1v1h-1zM617 236h1v1h-1zM618 236h1v1h-1zM619 236h1v1h-1zM620 236h1v1h-1zM621 236h1v1h-1zM622 236h1v1h-1zM623 236h1v1h-1zM624 236h1v1h-1zM625 236h1v1h-1zM626 236h1v1h-1zM627 236h1v1h-1zM628 236h1v1h-1zM629 236h1v1h-1zM630 236h1v1h-1zM631 236h1v1h-1zM632 236h1v1h-1zM633 236h1v1h-1zM634 236h1v1h-1zM635 236h1v1h-1zM636 236h1v1h-1zM637 236h1v1h-1zM638 236h1v1h-1zM639 236h1v1h-1zM640 236h1v1h-1zM641 236h1v1h-1zM642 236h1v1h-1zM643 236h1v1h-1zM644 236h1v1h-1zM645 236h1v1h-1zM646 236h1v1h-1zM647 236h1v1h-1zM648 236h1v1h-1zM649 236h1v1h-1zM650 236h1v1h-1zM651 236h1v1h-1zM652 236h1v1h-1zM653 236h1v1h-1zM654 236h1v1h-1zM655 236h1v1h-1zM656 236h1v1h-1zM657 236h1v1h-1zM658 236h1v1h-1zM659 236h1v1h-1zM660 236h1v1h-1zM661 236h1v1h-1zM662 236h1v1h-1zM663 236h1v1h-1zM664 236h1v1h-1zM665 236h1v1h-1zM666 236h1v1h-1zM667 236h1v1h-1zM668 236h1v1h-1zM669 236h1v1h-1zM670 236h1v1h-1zM671 236h1v1h-1zM672 236h1v1h-1zM673 236h1v1h-1zM674 236h1v1h-1zM675 236h1v1h-1zM676 236h1v1h-1zM677 236h1v1h-1zM678 236h1v1h-1zM679 236h1v1h-1zM680 236h1v1h-1zM681 236h1v1h-1zM682 236h1v1h-1zM683 236h1v1h-1zM684 236h1v1h-1zM685 236h1v1h-1zM686 236h1v1h-1zM687 236h1v1h-1zM688 236h1v1h-1zM689 236h1v1h-1zM690 236h1v1h-1zM691 236h1v1h-1zM692 236h1v1h-1zM693 236h1v1h-1zM694 236h1v1h-1zM695 236h1v1h-1zM696 236h1v1h-1zM697 236h1v1h-1zM698 236h1v1h-1zM699 236h1v1h-1zM700 236h1v1h-1zM701 236h1v1h-1zM702 236h1v1h-1zM703 236h1v1h-1zM704 236h1v1h-1zM705 236h1v1h-1zM706 236h1v1h-1zM707 236h1v1h-1zM708 236h1v1h-1zM709 236h1v1h-1zM710 236h1v1h-1zM711 236h1v1h-1zM712 236h1v1h-1zM713 236h1v1h-1zM714 236h1v1h-1zM715 236h1v1h-1zM716 236h1v1h-1zM717 236h1v1h-1zM718 236h1v1h-1zM719 236h1v1h-1zM720 236h1v1h-1zM721 236h1v1h-1zM722 236h1v1h-1zM723 236h1v1h-1zM724 236h1v1h-1zM725 236h1v1h-1zM726 236h1v1h-1zM727 236h1v1h-1zM728 236h1v1h-1zM729 236h1v1h-1zM730 236h1v1h-1zM731 236h1v1h-1zM732 236h1v1h-1zM733 236h1v1h-1zM734 236h1v1h-1zM735 236h1v1h-1zM736 236h1v1h-1zM737 236h1v1h-1zM738 236h1v1h-1zM739 236h1v1h-1zM740 236h1v1h-1zM741 236h1v1h-1zM742 236h1v1h-1zM743 236h1v1h-1zM744 236h1v1h-1zM745 236h1v1h-1zM746 236h1v1h-1zM747 236h1v1h-1zM748 236h1v1h-1zM749 236h1v1h-1zM750 236h1v1h-1zM751 236h1v1h-1zM752 236h1v1h-1zM753 236h1v1h-1zM754 236h1v1h-1zM755 236h1v1h-1zM756 236h1v1h-1zM757 236h1v1h-1zM758 236h1v1h-1zM759 236h1v1h-1zM760 236h1v1h-1zM761 236h1v1h-1zM762 236h1v1h-1zM763 236h1v1h-1zM764 236h1v1h-1zM765 236h1v1h-1zM766 236h1v1h-1zM767 236h1v1h-1zM768 236h1v1h-1zM769 236h1v1h-1zM770 236h1v1h-1zM771 236h1v1h-1zM772 236h1v1h-1zM773 236h1v1h-1zM774 236h1v1h-1zM775 236h1v1h-1zM776 236h1v1h-1zM777 236h1v1h-1zM778 236h1v1h-1zM779 236h1v1h-1zM780 236h1v1h-1zM781 236h1v1h-1zM782 236h1v1h-1zM783 236h1v1h-1zM784 236h1v1h-1zM785 236h1v1h-1zM786 236h1v1h-1zM787 236h1v1h-1zM788 236h1v1h-1zM789 236h1v1h-1zM790 236h1v1h-1zM791 236h1v1h-1zM792 236h1v1h-1zM793 236h1v1h-1zM794 236h1v1h-1zM795 236h1v1h-1zM796 236h1v1h-1zM797 236h1v1h-1zM798 236h1v1h-1zM799 236h1v1h-1zM800 236h1v1h-1zM801 236h1v1h-1zM802 236h1v1h-1zM803 236h1v1h-1zM804 236h1v1h-1zM805 236h1v1h-1zM806 236h1v1h-1zM807 236h1v1h-1zM808 236h1v1h-1zM809 236h1v1h-1zM810 236h1v1h-1zM811 236h1v1h-1zM812 236h1v1h-1zM813 236h1v1h-1zM814 236h1v1h-1zM815 236h1v1h-1zM816 236h1v1h-1zM817 236h1v1h-1zM818 236h1v1h-1zM819 236h1v1h-1zM820 236h1v1h-1zM821 236h1v1h-1zM822 236h1v1h-1zM823 236h1v1h-1zM824 236h1v1h-1zM825 236h1v1h-1zM826 236h1v1h-1zM827 236h1v1h-1zM828 236h1v1h-1zM829 236h1v1h-1zM830 236h1v1h-1zM831 236h1v1h-1zM832 236h1v1h-1zM833 236h1v1h-1zM834 236h1v1h-1zM835 236h1v1h-1zM836 236h1v1h-1zM837 236h1v1h-1zM838 236h1v1h-1zM839 236h1v1h-1zM840 236h1v1h-1zM841 236h1v1h-1zM842 236h1v1h-1zM843 236h1v1h-1zM844 236h1v1h-1zM845 236h1v1h-1zM846 236h1v1h-1zM847 236h1v1h-1zM848 236h1v1h-1zM849 236h1v1h-1zM850 236h1v1h-1zM851 236h1v1h-1zM852 236h1v1h-1zM853 236h1v1h-1zM854 236h1v1h-1zM855 236h1v1h-1zM856 236h1v1h-1zM857 236h1v1h-1zM858 236h1v1h-1zM859 236h1v1h-1zM860 236h1v1h-1zM861 236h1v1h-1zM862 236h1v1h-1zM863 236h1v1h-1zM864 236h1v1h-1zM865 236h1v1h-1zM866 236h1v1h-1zM867 236h1v1h-1zM868 236h1v1h-1zM869 236h1v1h-1zM870 236h1v1h-1zM871 236h1v1h-1zM872 236h1v1h-1zM873 236h1v1h-1zM874 236h1v1h-1zM875 236h1v1h-1zM876 236h1v1h-1zM877 236h1v1h-1zM878 236h1v1h-1zM879 236h1v1h-1zM880 236h1v1h-1zM881 236h1v1h-1zM882 236h1v1h-1zM883 236h1v1h-1zM884 236h1v1h-1zM885 236h1v1h-1zM886 236h1v1h-1zM887 236h1v1h-1zM888 236h1v1h-1zM889 236h1v1h-1zM890 236h1v1h-1zM891 236h1v1h-1zM892 236h1v1h-1zM893 236h1v1h-1zM894 236h1v1h-1zM895 236h1v1h-1zM896 236h1v1h-1zM897 236h1v1h-1zM898 236h1v1h-1zM899 236h1v1h-1zM900 236h1v1h-1zM901 236h1v1h-1zM902 236h1v1h-1zM903 236h1v1h-1zM904 236h1v1h-1zM905 236h1v1h-1zM906 236h1v1h-1zM907 236h1v1h-1zM908 236h1v1h-1zM909 236h1v1h-1zM910 236h1v1h-1zM911 236h1v1h-1zM912 236h1v1h-1zM913 236h1v1h-1zM914 236h1v1h-1zM915 236h1v1h-1zM916 236h1v1h-1zM917 236h1v1h-1zM918 236h1v1h-1zM919 236h1v1h-1zM920 236h1v1h-1zM921 236h1v1h-1zM922 236h1v1h-1zM923 236h1v1h-1zM924 236h1v1h-1zM925 236h1v1h-1zM926 236h1v1h-1zM927 236h1v1h-1zM928 236h1v1h-1zM929 236h1v1h-1zM930 236h1v1h-1zM931 236h1v1h-1zM932 236h1v1h-1zM933 236h1v1h-1zM934 236h1v1h-1zM935 236h1v1h-1zM936 236h1v1h-1zM937 236h1v1h-1zM938 236h1v1h-1zM939 236h1v1h-1zM940 236h1v1h-1zM941 236h1v1h-1zM942 236h1v1h-1zM943 236h1v1h-1zM944 236h1v1h-1zM945 236h1v1h-1zM946 236h1v1h-1zM947 236h1v1h-1zM948 236h1v1h-1zM949 236h1v1h-1zM950 236h1v1h-1zM951 236h1v1h-1zM952 236h1v1h-1zM953 236h1v1h-1zM954 236h1v1h-1zM955 236h1v1h-1zM956 236h1v1h-1zM957 236h1v1h-1zM958 236h1v1h-1zM959 236h1v1h-1zM960 236h1v1h-1zM961 236h1v1h-1zM962 236h1v1h-1zM963 236h1v1h-1zM964 236h1v1h-1zM965 236h1v1h-1zM966 236h1v1h-1zM967 236h1v1h-1zM968 236h1v1h-1zM969 236h1v1h-1zM970 236h1v1h-1zM971 236h1v1h-1zM972 236h1v1h-1zM973 236h1v1h-1zM974 236h1v1h-1zM975 236h1v1h-1zM976 236h1v1h-1zM977 236h1v1h-1zM978 236h1v1h-1zM979 236h1v1h-1zM980 236h1v1h-1zM981 236h1v1h-1zM982 236h1v1h-1zM983 236h1v1h-1zM984 236h1v1h-1zM985 236h1v1h-1zM986 236h1v1h-1zM987 236h1v1h-1zM988 236h1v1h-1zM989 236h1v1h-1zM990 236h1v1h-1zM991 236h1v1h-1zM992 236h1v1h-1zM993 236h1v1h-1zM994 236h1v1h-1zM995 236h1v1h-1zM996 236h1v1h-1zM997 236h1v1h-1zM998 236h1v1h-1zM999 236h1v1h-1zM1000 236h1v1h-1zM1001 236h1v1h-1zM1002 236h1v1h-1zM1003 236h1v1h-1zM1004 236h1v1h-1zM1005 236h1v1h-1zM1006 236h1v1h-1zM1007 236h1v1h-1zM1008 236h1v1h-1zM1009 236h1v1h-1zM1010 236h1v1h-1zM1011 236h1v1h-1zM1012 236h1v1h-1zM1013 236h1v1h-1zM1014 236h1v1h-1zM1015 236h1v1h-1zM1016 236h1v1h-1zM1017 236h1v1h-1zM1018 236h1v1h-1zM1019 236h1v1h-1zM1020 236h1v1h-1zM1021 236h1v1h-1zM1022 236h1v1h-1zM1023 236h1v1h-1zM1024 236h1v1h-1zM1025 236h1v1h-1zM1026 236h1v1h-1zM1027 236h1v1h-1zM1028 236h1v1h-1zM1029 236h1v1h-1zM1030 236h1v1h-1zM1031 236h1v1h-1zM1032 236h1v1h-1zM1033 236h1v1h-1zM1034 236h1v1h-1zM1035 236h1v1h-1zM1036 236h1v1h-1zM1037 236h1v1h-1zM1038 236h1v1h-1zM1039 236h1v1h-1zM1040 236h1v1h-1zM1041 236h1v1h-1zM1042 236h1v1h-1zM1043 236h1v1h-1zM1044 236h1v1h-1zM1045 236h1v1h-1zM1046 236h1v1h-1zM1047 236h1v1h-1zM1048 236h1v1h-1zM1049 236h1v1h-1zM1050 236h1v1h-1zM1051 236h1v1h-1zM1052 236h1v1h-1zM1053 236h1v1h-1zM1054 236h1v1h-1zM1055 236h1v1h-1zM1056 236h1v1h-1zM1057 236h1v1h-1zM1058 236h1v1h-1zM1059 236h1v1h-1zM1060 236h1v1h-1zM1061 236h1v1h-1zM1062 236h1v1h-1zM1063 236h1v1h-1zM1064 236h1v1h-1zM1065 236h1v1h-1zM1066 236h1v1h-1zM1067 236h1v1h-1zM1068 236h1v1h-1zM1069 236h1v1h-1zM1070 236h1v1h-1zM1071 236h1v1h-1zM1072 236h1v1h-1zM1073 236h1v1h-1zM1074 236h1v1h-1zM1075 236h1v1h-1zM1076 236h1v1h-1zM1077 236h1v1h-1zM1078 236h1v1h-1zM1079 236h1v1h-1zM1080 236h1v1h-1zM1081 236h1v1h-1zM1082 236h1v1h-1zM1083 236h1v1h-1zM1084 236h1v1h-1zM1085 236h1v1h-1zM1086 236h1v1h-1zM1087 236h1v1h-1zM1088 236h1v1h-1zM1089 236h1v1h-1zM1090 236h1v1h-1zM1091 236h1v1h-1zM1092 236h1v1h-1zM1093 236h1v1h-1zM1094 236h1v1h-1zM1095 236h1v1h-1zM1096 236h1v1h-1zM1097 236h1v1h-1zM1098 236h1v1h-1zM1099 236h1v1h-1zM1100 236h1v1h-1zM1101 236h1v1h-1zM1102 236h1v1h-1zM1103 236h1v1h-1zM1104 236h1v1h-1zM1105 236h1v1h-1zM1106 236h1v1h-1zM1107 236h1v1h-1zM1108 236h1v1h-1zM1109 236h1v1h-1zM1110 236h1v1h-1zM1111 236h1v1h-1zM1112 236h1v1h-1zM1113 236h1v1h-1zM1114 236h1v1h-1zM1115 236h1v1h-1zM1116 236h1v1h-1zM1117 236h1v1h-1zM1118 236h1v1h-1zM1119 236h1v1h-1zM1120 236h1v1h-1zM1121 236h1v1h-1zM1122 236h1v1h-1zM1123 236h1v1h-1zM1124 236h1v1h-1zM1125 236h1v1h-1zM1126 236h1v1h-1zM1127 236h1v1h-1zM1128 236h1v1h-1zM1129 236h1v1h-1zM1130 236h1v1h-1zM1131 236h1v1h-1zM1132 236h1v1h-1zM1133 236h1v1h-1zM1134 236h1v1h-1z"/>
<path fill="#0000ff" stroke="none" d="M35 236h1v1h-1zM36 236h1v1h-1zM37 234h1v2h-1zM38 233h1v1h-1zM39 230h1v3h-1zM40 227h1v3h-1zM41 225h1v2h-1zM42 220h1v5h-1zM43 214h1v6h-1zM44 210h1v4h-1zM45 206h1v4h-1zM46 201h1v5h-1zM47 197h1v4h-1zM48 193h1v4h-1zM49 188h1v5h-1zM50 183h1v5h-1zM51 179h1v4h-1zM52 177h1v2h-1zM53 174h1v3h-1zM54 171h1v3h-1zM55 169h1v2h-1zM56 168h1v1h-1zM57 167h1v1h-1zM58 166h1v1h-1zM59 167h1v1h-1zM60 167h1v1h-1zM61 168h1v1h-1zM62 169h1v2h-1zM63 171h1v2h-1zM64 173h1v2h-1zM65 175h1v1h-1zM66 176h1v2h-1zM67 178h1v2h-1zM68 180h1v2h-1zM69 182h1v1h-1zM70 183h1v2h-1zM71 185h1v1h-1zM72 186h1v1h-1zM73 187h1v1h-1zM74 188h1v2h-1zM75 190h1v1h-1zM76 191h1v1h-1zM77 192h1v1h-1zM78 193h1v1h-1zM79 194h1v1h-1zM80 195h1v1h-1zM81 196h1v1h-1zM82 197h1v1h-1zM83 198h1v1h-1zM84 199h1v1h-1zM85 200h1v1h-1zM86 201h1v1h-1zM87 202h1v1h-1zM88 203h1v1h-1zM89 203h1v1h-1zM90 204h1v1h-1zM91 205h1v2h-1zM92 206h1v1h-1zM93 205h1v1h-1zM94 203h1v2h-1zM95 201h1v2h-1zM96 199h1v2h-1zM97 196h1v3h-1zM98 192h1v4h-1zM99 188h1v4h-1zM100 184h1v4h-1zM101 181h1v3h-1zM102 177h1v4h-1zM103 174h1v3h-1zM104 170h1v4h-1zM105 167h1v3h-1zM106 164h1v3h-1zM107 161h1v3h-1zM108 158h1v3h-1zM109 156h1v2h-1zM110 154h1v2h-1zM111 153h1v1h-1zM112 152h1v1h-1zM113 152h1v1h-1zM114 153h1v1h-1zM115 154h1v1h-1zM116 155h1v2h-1zM117 157h1v2h-1zM118 159h1v2h-1zM119 161h1v2h-1zM120 163h1v2h-1zM121 165h1v2h-1zM122 167h1v2h-1zM123 169h1v2h-1zM124 171h1v1h-1zM125 172h1v2h-1zM126 174h1v2h-1zM127 176h1v2h-1zM128 178h1v1h-1zM129 179h1v2h-1zM130 181h1v1h-1zM131 182h1v2h-1zM132 184h1v1h-1zM133 185h1v2h-1zM134 187h1v1h-1zM135 188h1v2h-1zM136 190h1v1h-1zM137 191h1v1h-1zM138 192h1v1h-1zM139 193h1v1h-1zM140 194h1v1h-1zM141 195h1v1h-1zM142 196h1v1h-1zM143 197h1v1h-1zM144 198h1v1h-1zM145 199h1v1h-1zM146 200h1v1h-1zM147 200h1v1h-1zM148 200h1v1h-1zM149 198h1v2h-1zM150 196h1v2h-1zM151 194h1v2h-1zM152 192h1v2h-1zM153 188h1v4h-1zM154 184h1v4h-1zM155 180h1v4h-1zM156 177h1v3h-1zM157 173h1v4h-1zM158 170h1v3h-1zM159 166h1v4h-1zM160 163h1v3h-1zM161 161h1v2h-1zM162 158h1v3h-1zM163 154h1v4h-1zM164 152h1v2h-1zM165 151h1v1h-1zM166 151h1v1h-1zM167 150h1v1h-1zM168 150h1v1h-1zM169 151h1v1h-1zM170 152h1v2h-1zM171 154h1v2h-1zM172 156h1v2h-1zM173 158h1v2h-1zM174 160h1v2h-1zM175 162h1v2h-1zM176 164h1v2h-1zM177 166h1v2h-1zM178 168h1v1h-1zM179 169h1v2h-1zM180 171h1v2h-1zM181 173h1v2h-1zM182 175h1v1h-1zM183 176h1v2h-1zM184 178h1v1h-1zM185 179h1v2h-1zM186 181h1v1h-1zM187 182h1v2h-1zM188 184h1v1h-1zM189 185h1v2h-1zM190 187h1v1h-1zM191 188h1v1h-1zM192 189h1v1h-1zM193 190h1v2h-1zM194 192h1v1h-1zM195 193h1v1h-1zM196 194h1v1h-1zM197 195h1v1h-1zM198 196h1v1h-1zM199 197h1v1h-1zM200 198h1v1h-1zM201 199h1v1h-1zM202 199h1v1h-1zM203 199h1v1h-1zM204 198h1v1h-1zM205 196h1v2h-1zM206 194h1v2h-1zM207 191h1v3h-1zM208 187h1v4h-1zM209 183h1v4h-1zM210 179h1v4h-1zM211 176h1v3h-1zM212 172h1v4h-1zM213 169h1v3h-1zM214 165h1v4h-1zM215 162h1v3h-1zM216 160h1v2h-1zM217 157h1v3h-1zM218 154h1v3h-1zM219 152h1v2h-1zM220 150h1v2h-1zM221 149h1v1h-1zM222 149h1v1h-1zM223 149h1v1h-1zM224 150h1v1h-1zM225 151h1v2h-1zM226 153h1v2h-1zM227 155h1v2h-1zM228 157h1v2h-1zM229 159h1v2h-1zM230 161h1v2h-1zM231 163h1v2h-1zM232 165h1v2h-1zM233 167h1v2h-1zM234 169h1v2h-1zM235 171h1v2h-1zM236 173h1v2h-1zM237 175h1v1h-1zM238 176h1v2h-1zM239 178h1v1h-1zM240 179h1v2h-1zM241 181h1v1h-1zM242 182h1v1h-1zM243 183h1v1h-1zM244 184h1v2h-1zM245 186h1v1h-1zM246 187h1v1h-1zM247 188h1v2h-1zM248 190h1v1h-1zM249 191h1v2h-1zM250 193h1v1h-1zM251 194h1v1h-1zM252 195h1v1h-1zM253 196h1v1h-1zM254 197h1v1h-1zM255 198h1v1h-1zM256 199h1v1h-1zM257 199h1v1h-1zM258 199h1v1h-1zM259 197h1v2h-1zM260 196h1v1h-1zM261 194h1v2h-1zM262 191h1v3h-1zM263 187h1v4h-1zM264 183h1v4h-1zM265 179h1v4h-1zM266 176h1v3h-1zM267 172h1v4h-1zM268 169h1v3h-1zM269 165h1v4h-1zM270 161h1v4h-1zM271 158h1v3h-1zM272 156h1v2h-1zM273 154h1v2h-1zM274 152h1v2h-1zM275 150h1v2h-1zM276 149h1v1h-1zM277 149h1v1h-1zM278 149h1v1h-1zM279 150h1v1h-1zM280 151h1v1h-1zM281 152h1v2h-1zM282 154h1v2h-1zM283 156h1v2h-1zM284 158h1v2h-1zM285 160h1v3h-1zM286 163h1v2h-1zM287 165h1v2h-1zM288 167h1v2h-1zM289 169h1v2h-1zM290 171h1v2h-1zM291 173h1v2h-1zM292 175h1v1h-1zM293 176h1v2h-1zM294 178h1v1h-1zM295 179h1v2h-1zM296 181h1v1h-1zM297 182h1v1h-1zM298 183h1v1h-1zM299 184h1v2h-1zM300 186h1v1h-1zM301 187h1v1h-1zM302 188h1v2h-1zM303 190h1v1h-1zM304 191h1v2h-1zM305 193h1v1h-1zM306 194h1v1h-1zM307 195h1v1h-1zM308 196h1v1h-1zM309 197h1v1h-1zM310 198h1v1h-1zM311 199h1v1h-1zM312 199h1v1h-1zM313 199h1v1h-1zM314 197h1v2h-1zM315 196h1v1h-1zM316 194h1v2h-1zM317 191h1v3h-1zM318 187h1v4h-1zM319 183h1v4h-1zM320 179h1v4h-1zM321 176h1v3h-1zM322 172h1v4h-1zM323 169h1v3h-1zM324 165h1v4h-1zM325 161h1v4h-1zM326 158h1v3h-1zM327 156h1v2h-1zM328 154h1v2h-1zM329 152h1v2h-1zM330 150h1v2h-1zM331 149h1v1h-1zM332 149h1v1h-1zM333 149h1v1h-1zM334 150h1v1h-1zM335 151h1v1h-1zM336 152h1v2h-1zM337 154h1v2h-1zM338 156h1v2h-1zM339 158h1v2h-1zM340 160h1v3h-1zM341 163h1v2h-1zM342 165h1v2h-1zM343 167h1v2h-1zM344 169h1v2h-1zM345 171h1v2h-1zM346 173h1v2h-1zM347 175h1v1h-1zM348 176h1v2h-1zM349 178h1v2h-1zM350 180h1v2h-1zM351 182h1v1h-1zM352 183h1v1h-1zM353 184h1v1h-1zM354 185h1v1h-1zM355 186h1v1h-1zM356 187h1v1h-1zM357 188h1v2h-1zM358 190h1v1h-1zM359 191h1v2h-1zM360 193h1v1h-1zM361 194h1v1h-1zM362 195h1v1h-1zM363 196h1v1h-1zM364 197h1v1h-1zM365 198h1v1h-1zM366 199h1v1h-1zM367 199h1v1h-1zM368 199h1v1h-1zM369 197h1v2h-1zM370 196h1v1h-1zM371 194h1v2h-1zM372 191h1v3h-1zM373 187h1v4h-1zM374 183h1v4h-1zM375 179h1v4h-1zM376 176h1v3h-1zM377 172h1v4h-1zM378 169h1v3h-1zM379 165h1v4h-1zM380 161h1v4h-1zM381 158h1v3h-1zM382 156h1v2h-1zM383 154h1v2h-1zM384 152h1v2h-1zM385 150h1v2h-1zM386 149h1v1h-1zM387 149h1v1h-1zM388 149h1v1h-1zM389 150h1v1h-1zM390 151h1v1h-1zM391 152h1v2h-1zM392 154h1v2h-1zM393 156h1v2h-1zM394 158h1v2h-1zM395 160h1v3h-1zM396 163h1v2h-1zM397 165h1v2h-1zM398 167h1v2h-1zM399 169h1v2h-1zM400 171h1v2h-1zM401 173h1v2h-1zM402 175h1v1h-1zM403 176h1v2h-1zM404 178h1v1h-1zM405 179h1v1h-1zM406 180h1v2h-1zM407 182h1v1h-1zM408 183h1v2h-1zM409 185h1v1h-1zM410 186h1v2h-1zM411 188h1v1h-1zM412 189h1v1h-1zM413 190h1v2h-1zM414 192h1v1h-1zM415 193h1v1h-1zM416 194h1v1h-1zM417 195h1v1h-1zM418 196h1v1h-1zM419 197h1v1h-1zM420 198h1v1h-1zM421 199h1v1h-1zM422 199h1v1h-1zM423 199h1v1h-1zM424 197h1v2h-1zM425 196h1v1h-1zM426 194h1v2h-1zM427 191h1v3h-1zM428 187h1v4h-1zM429 183h1v4h-1zM430 179h1v4h-1zM431 176h1v3h-1zM432 172h1v4h-1zM433 169h1v3h-1zM434 165h1v4h-1zM435 162h1v3h-1zM436 159h1v3h-1zM437 157h1v2h-1zM438 154h1v3h-1zM439 152h1v2h-1zM440 150h1v2h-1zM441 149h1v1h-1zM442 149h1v1h-1zM443 149h1v1h-1zM444 150h1v1h-1zM445 151h1v1h-1zM446 152h1v2h-1zM447 154h1v2h-1zM448 156h1v2h-1zM449 158h1v2h-1zM450 160h1v3h-1zM451 163h1v2h-1zM452 165h1v2h-1zM453 167h1v2h-1zM454 169h1v2h-1zM455 171h1v2h-1zM456 173h1v2h-1zM457 175h1v1h-1zM458 176h1v2h-1zM459 178h1v1h-1zM460 179h1v1h-1zM461 180h1v2h-1zM462 182h1v1h-1zM463 183h1v2h-1zM464 185h1v1h-1zM465 186h1v2h-1zM466 188h1v1h-1zM467 189h1v1h-1zM468 190h1v2h-1zM469 192h1v1h-1zM470 193h1v1h-1zM471 194h1v1h-1zM472 195h1v1h-1zM473 196h1v1h-1zM474 197h1v1h-1zM475 198h1v1h-1zM476 199h1v1h-1zM477 199h1v1h-1zM478 199h1v1h-1zM479 197h1v2h-1zM480 196h1v1h-1zM481 194h1v2h-1zM482 191h1v3h-1zM483 187h1v4h-1zM484 183h1v4h-1zM485 179h1v4h-1zM486 176h1v3h-1zM487 172h1v4h-1zM488 169h1v3h-1zM489 165h1v4h-1zM490 162h1v3h-1zM491 159h1v3h-1zM492 157h1v2h-1zM493 154h1v3h-1zM494 152h1v2h-1zM495 150h1v2h-1zM496 149h1v1h-1zM497 149h1v1h-1zM498 149h1v1h-1zM499 150h1v1h-1zM500 151h1v1h-1zM501 152h1v2h-1zM502 154h1v2h-1zM503 156h1v2h-1zM504 158h1v2h-1zM505 160h1v3h-1zM506 163h1v2h-1zM507 165h1v2h-1zM508 167h1v2h-1zM509 169h1v2h-1zM510 171h1v2h-1zM511 173h1v2h-1zM512 175h1v1h-1zM513 176h1v2h-1zM514 178h1v1h-1zM515 179h1v1h-1zM516 180h1v2h-1zM517 182h1v1h-1zM518 183h1v2h-1zM519 185h1v1h-1zM520 186h1v2h-1zM521 188h1v1h-1zM522 189h1v1h-1zM523 190h1v2h-1zM524 192h1v1h-1zM525 193h1v1h-1zM526 194h1v1h-1zM527 195h1v1h-1zM528 196h1v1h-1zM529 197h1v1h-1zM530 198h1v1h-1zM531 199h1v1h-1zM532 199h1v1h-1zM533 199h1v1h-1zM534 197h1v2h-1zM535 196h1v1h-1zM536 194h1v2h-1zM537 191h1v3h-1zM538 187h1v4h-1zM539 183h1v4h-1zM540 179h1v4h-1zM541 176h1v3h-1zM542 172h1v4h-1zM543 169h1v3h-1zM544 165h1v4h-1zM545 162h1v3h-1zM546 159h1v3h-1zM547 157h1v2h-1zM548 155h1v2h-1zM549 153h1v2h-1zM550 151h1v2h-1zM551 149h1v2h-1zM552 149h1v1h-1zM553 149h1v1h-1zM554 150h1v1h-1zM555 151h1v1h-1zM556 152h1v2h-1zM557 154h1v2h-1zM558 156h1v2h-1zM559 158h1v2h-1zM560 160h1v3h-1zM561 163h1v2h-1zM562 165h1v2h-1zM563 167h1v2h-1zM564 169h1v2h-1zM565 171h1v2h-1zM566 173h1v2h-1zM567 175h1v1h-1zM568 176h1v2h-1zM569 178h1v1h-1zM570 179h1v2h-1zM571 181h1v1h-1zM572 182h1v1h-1zM573 183h1v2h-1zM574 185h1v1h-1zM575 186h1v1h-1zM576 187h1v1h-1zM577 188h1v2h-1zM578 190h1v1h-1zM579 191h1v1h-1zM580 192h1v1h-1zM581 193h1v2h-1zM582 195h1v1h-1zM583 196h1v1h-1zM584 197h1v1h-1zM585 198h1v1h-1zM586 199h1v1h-1zM587 199h1v1h-1zM588 198h1v1h-1zM589 197h1v1h-1zM590 196h1v2h-1zM591 193h1v3h-1zM592 190h1v3h-1zM593 188h1v2h-1zM594 184h1v4h-1zM595 180h1v4h-1zM596 176h1v4h-1zM597 172h1v4h-1zM598 168h1v4h-1zM599 164h1v4h-1zM600 161h1v3h-1zM601 158h1v3h-1zM602 156h1v2h-1zM603 154h1v2h-1zM604 153h1v1h-1zM605 151h1v2h-1zM606 149h1v2h-1zM607 149h1v1h-1zM608 149h1v1h-1zM609 150h1v1h-1zM610 151h1v2h-1zM611 153h1v2h-1zM612 155h1v2h-1zM613 157h1v2h-1zM614 159h1v2h-1zM615 161h1v2h-1zM616 163h1v2h-1zM617 165h1v2h-1zM618 167h1v2h-1zM619 169h1v2h-1zM620 171h1v2h-1zM621 173h1v1h-1zM622 174h1v2h-1zM623 176h1v2h-1zM624 178h1v1h-1zM625 179h1v2h-1zM626 181h1v1h-1zM627 182h1v1h-1zM628 183h1v2h-1zM629 185h1v1h-1zM630 186h1v1h-1zM631 187h1v1h-1zM632 188h1v2h-1zM633 190h1v1h-1zM634 191h1v1h-1zM635 192h1v1h-1zM636 193h1v1h-1zM637 194h1v2h-1zM638 196h1v1h-1zM639 197h1v1h-1zM640 198h1v1h-1zM641 199h1v1h-1zM642 200h1v1h-1zM643 201h1v1h-1zM644 202h1v1h-1zM645 203h1v1h-1zM646 204h1v1h-1zM647 205h1v1h-1zM648 205h1v1h-1zM649 206h1v1h-1zM650 207h1v1h-1zM651 208h1v1h-1zM652 208h1v1h-1zM653 209h1v1h-1zM654 210h1v1h-1zM655 210h1v1h-1zM656 211h1v1h-1zM657 212h1v1h-1zM658 212h1v1h-1zM659 213h1v1h-1zM660 214h1v1h-1zM661 214h1v1h-1zM662 215h1v1h-1zM663 215h1v1h-1zM664 216h1v1h-1zM665 216h1v1h-1zM666 217h1v1h-1zM667 217h1v1h-1zM668 218h1v1h-1zM669 218h1v1h-1zM670 218h1v1h-1zM671 219h1v1h-1zM672 219h1v1h-1zM673 220h1v1h-1zM674 220h1v1h-1zM675 221h1v1h-1zM676 221h1v1h-1zM677 221h1v1h-1zM678 222h1v1h-1zM679 222h1v1h-1zM680 222h1v1h-1zM681 223h1v1h-1zM682 223h1v1h-1zM683 223h1v1h-1zM684 224h1v1h-1zM685 224h1v1h-1zM686 224h1v1h-1zM687 225h1v1h-1zM688 225h1v1h-1zM689 225h1v1h-1zM690 225h1v1h-1zM691 226h1v1h-1zM692 226h1v1h-1zM693 226h1v1h-1zM694 226h1v1h-1zM695 226h1v1h-1zM696 227h1v1h-1zM697 227h1v1h-1zM698 227h1v1h-1zM699 227h1v1h-1zM700 227h1v1h-1zM701 228h1v1h-1zM702 228h1v1h-1zM703 228h1v1h-1zM704 228h1v1h-1zM705 228h1v1h-1zM706 229h1v1h-1zM707 229h1v1h-1zM708 229h1v1h-1zM709 229h1v1h-1zM710 229h1v1h-1zM711 230h1v1h-1zM712 230h1v1h-1zM713 230h1v1h-1zM714 230h1v1h-1zM715 230h1v1h-1zM716 230h1v1h-1zM717 230h1v1h-1zM718 231h1v1h-1zM719 231h1v1h-1zM720 231h1v1h-1zM721 231h1v1h-1zM722 231h1v1h-1zM723 231h1v1h-1zM724 231h1v1h-1zM725 231h1v1h-1zM726 231h1v1h-1zM727 232h1v1h-1zM728 232h1v1h-1zM729 232h1v1h-1zM730 232h1v1h-1zM731 232h1v1h-1zM732 232h1v1h-1zM733 232h1v1h-1zM734 232h1v1h-1zM735 232h1v1h-1zM736 233h1v1h-1zM737 233h1v1h-1zM738 233h1v1h-1zM739 233h1v1h-1zM740 233h1v1h-1zM741 233h1v1h-1zM742 233h1v1h-1zM743 233h1v1h-1zM744 233h1v1h-1zM745 233h1v1h-1zM746 233h1v1h-1zM747 234h1v1h-1zM748 234h1v1h-1zM749 234h1v1h-1zM750 234h1v1h-1zM751 234h1v1h-1zM752 234h1v1h-1zM753 234h1v1h-1zM754 234h1v1h-1zM755 234h1v1h-1zM756 234h1v1h-1zM757 234h1v1h-1zM758 234h1v1h-1zM759 234h1v1h-1zM760 234h1v1h-1zM761 234h1v1h-1zM762 234h1v1h-1zM763 234h1v1h-1zM764 234h1v1h-1zM765 235h1v1h-1zM766 235h1v1h-1zM767 235h1v1h-1zM768 235h1v1h-1zM769 235h1v1h-1zM770 235h1v1h-1zM771 235h1v1h-1zM772 235h1v1h-1zM773 235h1v1h-1zM774 235h1v1h-1zM775 235h1v1h-1zM776 235h1v1h-1zM777 235h1v1h-1zM778 235h1v1h-1zM779 235h1v1h-1zM780 235h1v1h-1zM781 235h1v1h-1zM782 235h1v1h-1zM783 235h1v1h-1zM784 235h1v1h-1zM785 235h1v1h-1zM786 235h1v1h-1zM787 235h1v1h-1zM788 235h1v1h-1zM789 235h1v1h-1zM790 235h1v1h-1zM791 235h1v1h-1zM792 235h1v1h-1zM793 235h1v1h-1zM794 235h1v1h-1zM795 235h1v1h-1zM796 235h1v1h-1zM797 235h1v1h-1zM798 235h1v1h-1zM799 235h1v1h-1zM800 235h1v1h-1zM801 235h1v1h-1zM802 235h1v1h-1zM803 235h1v1h-1zM804 235h1v1h-1zM805 235h1v1h-1zM806 235h1v1h-1zM807 235h1v1h-1zM808 235h1v1h-1zM809 235h1v1h-1zM810 235h1v1h-1zM811 235h1v1h-1zM812 235h1v1h-1zM813 235h1v1h-1zM814 235h1v1h-1zM815 235h1v1h-1zM816 235h1v1h-1zM817 235h1v1h-1zM818 235h1v1h-1zM819 235h1v1h-1zM820 235h1v1h-1zM821 235h1v1h-1zM822 235h1v1h-1zM823 235h1v1h-1zM824 235h1v1h-1zM825 235h1v1h-1zM826 235h1v1h-1zM827 236h1v1h-1zM828 236h1v1h-1zM829 236h1v1h-1zM830 236h1v1h-1zM831 236h1v1h-1zM832 236h1v1h-1zM833 236h1v1h-1zM834 236h1v1h-1zM835 236h1v1h-1zM836 236h1v1h-1zM837 236h1v1h-1zM838 236h1v1h-1zM839 236h1v1h-1zM840 236h1v1h-1zM841 236h1v1h-1zM842 236h1v1h-1zM843 236h1v1h-1zM844 236h1v1h-1zM845 236h1v1h-1zM846 236h1v1h-1zM847 236h1v1h-1zM848 236h1v1h-1zM849 236h1v1h-1zM850 236h1v1h-1zM851 236h1v1h-1zM852 236h1v1h-1zM853 236h1v1h-1zM854 236h1v1h-1zM855 236h1v1h-1zM856 236h1v1h-1zM857 236h1v1h-1zM858 236h1v1h-1zM859 236h1v1h-1zM860 236h1v1h-1zM861 236h1v1h-1zM862 236h1v1h-1zM863 236h1v1h-1zM864 236h1v1h-1zM865 236h1v1h-1zM866 236h1v1h-1zM867 236h1v1h-1zM868 236h1v1h-1zM869 236h1v1h-1zM870 236h1v1h-1zM871 236h1v1h-1zM872 236h1v1h-1zM873 236h1v1h-1zM874 236h1v1h-1zM875 236h1v1h-1zM876 236h1v1h-1zM877 236h1v1h-1zM878 236h1v1h-1zM879 236h1v1h-1zM880 236h1v1h-1zM881 236h1v1h-1zM882 236h1v1h-1zM883 236h1v1h-1zM884 236h1v1h-1zM885 236h1v1h-1zM886 236h1v1h-1zM887 236h1v1h-1zM888 236h1v1h-1zM889 236h1v1h-1zM890 236h1v1h-1zM891 236h1v1h-1zM892 236h1v1h-1zM893 236h1v1h-1zM894 236h1v1h-1zM895 236h1v1h-1zM896 236h1v1h-1zM897 236h1v1h-1zM898 236h1v1h-1zM899 236h1v1h-1zM900 236h1v1h-1zM901 236h1v1h-1zM902 236h1v1h-1zM903 236h1v1h-1zM904 236h1v1h-1zM905 236h1v1h-1zM906 236h1v1h-1zM907 236h1v1h-1zM908 236h1v1h-1zM909 236h1v1h-1zM910 236h1v1h-1zM911 236h1v1h-1zM912 236h1v1h-1zM913 236h1v1h-1zM914 236h1v1h-1zM915 236h1v1h-1zM916 236h1v1h-1zM917 236h1v1h-1zM918 236h1v1h-1zM919 236h1v1h-1zM920 236h1v1h-1zM921 236h1v1h-1zM922 236h1v1h-1zM923 236h1v1h-1zM924 236h1v1h-1zM925 236h1v1h-1zM926 236h1v1h-1zM927 236h1v1h-1zM928 236h1v1h-1zM929 236h1v1h-1zM930 236h1v1h-1zM931 236h1v1h-1zM932 236h1v1h-1zM933 236h1v1h-1zM934 236h1v1h-1zM935 236h1v1h-1zM936 236h1v1h-1zM937 236h1v1h-1zM938 236h1v1h-1zM939 236h1v1h-1zM940 236h1v1h-1zM941 236h1v1h-1zM942 236h1v1h-1zM943 236h1v1h-1zM944 236h1v1h-1zM945 236h1v1h-1zM946 236h1v1h-1zM947 236h1v1h-1zM948 236h1v1h-1zM949 236h1v1h-1zM950 236h1v1h-1zM951 236h1v1h-1zM952 236h1v1h-1zM953 236h1v1h-1zM954 236h1v1h-1zM955 236h1v1h-1zM956 236h1v1h-1zM957 236h1v1h-1zM958 236h1v1h-1zM959 236h1v1h-1zM960 236h1v1h-1zM961 236h1v1h-1zM962 236h1v1h-1zM963 236h1v1h-1zM964 236h1v1h-1zM965 236h1v1h-1zM966 236h1v1h-1zM967 236h1v1h-1zM968 236h1v1h-1zM969 236h1v1h-1zM970 236h1v1h-1zM971 236h1v1h-1zM972 236h1v1h-1zM973 236h1v1h-1zM974 236h1v1h-1zM975 236h1v1h-1zM976 236h1v1h-1zM977 236h1v1h-1zM978 236h1v1h-1zM979 236h1v1h-1zM980 236h1v1h-1zM981 236h1v1h-1zM982 236h1v1h-1zM983 236h1v1h-1zM984 236h1v1h-1zM985 236h1v1h-1zM986 236h1v1h-1zM987 236h1v1h-1zM988 236h1v1h-1zM989 236h1v1h-1zM990 236h1v1h-1zM991 236h1v1h-1zM992 236h1v1h-1zM993 236h1v1h-1zM994 236h1v1h-1zM995 236h1v1h-1zM996 236h1v1h-1zM997 236h1v1h-1zM998 236h1v1h-1zM999 236h1v1h-1zM1000 236h1v1h-1zM1001 236h1v1h-1zM1002 236h1v1h-1zM1003 236h1v1h-1zM1004 236h1v1h-1zM1005 236h1v1h-1zM1006 236h1v1h-1zM1007 236h1v1h-1zM1008 236h1v1h-1zM1009 236h1v1h-1zM1010 236h1v1h-1zM1011 236h1v1h-1zM1012 236h1v1h-1zM1013 236h1v1h-1zM1014 236h1v1h-1zM1015 236h1v1h-1zM1016 236h1v1h-1zM1017 236h1v1h-1zM1018 236h1v1h-1zM1019 236h1v1h-1zM1020 236h1v1h-1zM1021 236h1v1h-1zM1022 236h1v1h-1zM1023 236h1v1h-1zM1024 236h1v1h-1zM1025 236h1v1h-1zM1026 236h1v1h-1zM1027 236h1v1h-1zM1028 236h1v1h-1zM1029 236h1v1h-1zM1030 236h1v1h-1zM1031 236h1v1h-1zM1032 236h1v1h-1zM1033 236h1v1h-1zM1034 236h1v1h-1zM1035 236h1v1h-1zM1036 236h1v1h-1zM1037 236h1v1h-1zM1038 236h1v1h-1zM1039 236h1v1h-1zM1040 236h1v1h-1zM1041 236h1v1h-1zM1042 236h1v1h-1zM1043 236h1v1h-1zM1044 236h1v1h-1zM1045 236h1v1h-1zM1046 236h1v1h-1zM1047 236h1v1h-1zM1048 236h1v1h-1zM1049 236h1v1h-1zM1050 236h1v1h-1zM1051 236h1v1h-1zM1052 236h1v1h-1zM1053 236h1v1h-1zM1054 236h1v1h-1zM1055 236h1v1h-1zM1056 236h1v1h-1zM1057 236h1v1h-1zM1058 236h1v1h-1zM1059 236h1v1h-1zM1060 236h1v1h-1zM1061 236h1v1h-1zM1062 236h1v1h-1zM1063 236h1v1h-1zM1064 236h1v1h-1zM1065 236h1v1h-1zM1066 236h1v1h-1zM1067 236h1v1h-1zM1068 236h1v1h-1zM1069 236h1v1h-1zM1070 236h1v1h-1zM1071 236h1v1h-1zM1072 236h1v1h-1zM1073 236h1v1h-1zM1074 236h1v1h-1zM1075 236h1v1h-1zM1076 236h1v1h-1zM1077 236h1v1h-1zM1078 236h1v1h-1zM1079 236h1v1h-1zM1080 236h1v1h-1zM1081 236h1v1h-1zM1082 236h1v1h-1zM1083 236h1v1h-1zM1084 236h1v1h-1zM1085 236h1v1h-1zM1086 236h1v1h-1zM1087 236h1v1h-1zM1088 236h1v1h-1zM1089 236h1v1h-1zM1090 236h1v1h-1zM1091 236h1v1h-1zM1092 236h1v1h-1zM1093 236h1v1h-1zM1094 236h1v1h-1zM1095 236h1v1h-1zM1096 236h1v1h-1zM1097 236h1v1h-1zM1098 236h1v1h-1zM1099 236h1v1h-1zM1100 236h1v1h-1zM1101 236h1v1h-1zM1102 236h1v1h-1zM1103 236h1v1h-1zM1104 236h1v1h-1zM1105 236h1v1h-1zM1106 236h1v1h-1zM1107 236h1v1h-1zM1108 236h1v1h-1zM1109 236h1v1h-1zM1110 236h1v1h-1zM1111 236h1v1h-1zM1112 236h1v1h-1zM1113 236h1v1h-1zM1114 236h1v1h-1zM1115 236h1v1h-1zM1116 236h1v1h-1zM1117 236h1v1h-1zM1118 236h1v1h-1zM1119 236h1v1h-1zM1120 236h1v1h-1zM1121 236h1v1h-1zM1122 236h1v1h-1zM1123 236h1v1h-1zM1124 236h1v1h-1zM1125 236h1v1h-1zM1126 236h1v1h-1zM1127 236h1v1h-1zM1128 236h1v1h-1zM1129 236h1v1h-1zM1130 236h1v1h-1zM1131 236h1v1h-1zM1132 236h1v1h-1zM1133 236h1v1h-1zM1134 236h1v1h-1zM1135 236h1v1h-1z"/>
<path stroke="#ff0000" d="M34 236.5H42.5V116.5H675.5V236.5H1134"/>
</g>
</g>
<g stroke="none" shape-rendering="crispEdges">
<path fill="#000080" d="M126 588h1v22h-1zM126 733h1v22h-1zM141 588h1v22h-1zM141 733h1v22h-1zM164 673h1v5h-1zM165 668h1v5h-1zM165 678h1v5h-1zM185 652h1v4h-1zM185 658h1v11h-1zM185 695h1v7h-1zM204 668h1v5h-1zM204 678h1v5h-1zM205 673h1v5h-1zM260 588h1v22h-1zM260 733h1v22h-1zM275 588h1v22h-1zM275 733h1v22h-1zM329 632h1v16h-1zM329 653h1v18h-1zM391 611h1v4h-1zM391 655h1v5h-1zM556 663h1v5h-1zM557 658h1v5h-1zM557 668h1v5h-1zM577 640h1v6h-1zM577 648h1v11h-1zM577 685h1v6h-1zM596 658h1v5h-1zM596 668h1v5h-1zM597 663h1v5h-1zM652 753h1v22h-1zM667 753h1v22h-1zM711 796h1v18h-1zM711 818h1v18h-1zM753 776h1v4h-1zM753 820h1v5h-1zM887 743h1v42h-1zM918 651h1v5h-1zM918 696h1v5h-1zM1011 743h1v42h-1zM1042 651h1v5h-1zM1042 696h1v5h-1zM127 589h1v1h-1zM261 589h1v1h-1zM128 590h2v1h-2zM262 590h2v1h-2zM130 591h1v1h-1zM264 591h1v1h-1zM131 592h2v1h-2zM265 592h2v1h-2zM133 593h1v1h-1zM267 593h1v1h-1zM134 594h1v1h-1zM268 594h1v1h-1zM135 595h2v1h-2zM269 595h2v1h-2zM137 596h1v1h-1zM271 596h1v1h-1zM138 597h2v1h-2zM272 597h2v1h-2zM115 598h11v1h-11zM140 598h1v1h-1zM142 598h11v1h-11zM249 598h11v1h-11zM274 598h1v1h-1zM276 598h11v1h-11zM140 599h1v1h-1zM274 599h1v1h-1zM138 600h2v1h-2zM272 600h2v1h-2zM137 601h1v1h-1zM271 601h1v1h-1zM135 602h2v1h-2zM269 602h2v1h-2zM134 603h1v1h-1zM268 603h1v1h-1zM133 604h1v1h-1zM267 604h1v1h-1zM131 605h2v1h-2zM265 605h2v1h-2zM130 606h1v1h-1zM264 606h1v1h-1zM128 607h2v1h-2zM262 607h2v1h-2zM127 608h1v1h-1zM261 608h1v1h-1zM392 614h1v1h-1zM393 615h2v1h-2zM395 616h2v1h-2zM397 617h2v1h-2zM399 618h2v1h-2zM401 619h2v1h-2zM400 620h2v1h-2zM398 621h2v1h-2zM396 622h2v1h-2zM394 623h2v1h-2zM392 624h2v1h-2zM390 625h2v1h-2zM388 626h2v1h-2zM386 627h2v1h-2zM384 628h2v1h-2zM382 629h2v1h-2zM381 630h2v1h-2zM383 631h2v1h-2zM385 632h2v1h-2zM387 633h2v1h-2zM389 634h2v1h-2zM391 635h2v1h-2zM393 636h2v1h-2zM395 637h2v1h-2zM397 638h2v1h-2zM399 639h2v1h-2zM401 640h2v1h-2zM400 641h2v1h-2zM398 642h2v1h-2zM396 643h2v1h-2zM394 644h2v1h-2zM392 645h2v1h-2zM574 645h3v1h-3zM578 645h2v1h-2zM390 646h2v1h-2zM569 646h5v1h-5zM580 646h5v1h-5zM319 647h10v1h-10zM330 647h11v1h-11zM388 647h2v1h-2zM568 647h1v1h-1zM585 647h1v1h-1zM386 648h2v1h-2zM566 648h2v1h-2zM586 648h2v1h-2zM384 649h2v1h-2zM565 649h1v1h-1zM588 649h1v1h-1zM382 650h2v1h-2zM563 650h2v1h-2zM589 650h2v1h-2zM381 651h2v1h-2zM562 651h1v1h-1zM591 651h1v1h-1zM383 652h2v1h-2zM561 652h1v1h-1zM592 652h1v1h-1zM319 653h10v1h-10zM330 653h11v1h-11zM385 653h3v1h-3zM561 653h1v1h-1zM572 653h5v1h-5zM578 653h5v1h-5zM592 653h1v1h-1zM388 654h2v1h-2zM560 654h1v1h-1zM593 654h1v1h-1zM182 655h3v1h-3zM186 655h2v1h-2zM390 655h1v1h-1zM559 655h1v1h-1zM594 655h1v1h-1zM177 656h5v1h-5zM188 656h5v1h-5zM558 656h1v1h-1zM595 656h1v1h-1zM919 656h2v1h-2zM1043 656h2v1h-2zM176 657h1v1h-1zM193 657h1v1h-1zM558 657h1v1h-1zM595 657h1v1h-1zM921 657h2v1h-2zM1045 657h2v1h-2zM174 658h2v1h-2zM194 658h2v1h-2zM923 658h2v1h-2zM1047 658h2v1h-2zM173 659h1v1h-1zM196 659h1v1h-1zM925 659h2v1h-2zM1049 659h2v1h-2zM171 660h2v1h-2zM197 660h2v1h-2zM927 660h2v1h-2zM1051 660h2v1h-2zM170 661h1v1h-1zM199 661h1v1h-1zM926 661h2v1h-2zM1050 661h2v1h-2zM169 662h1v1h-1zM200 662h1v1h-1zM924 662h2v1h-2zM1048 662h2v1h-2zM169 663h1v1h-1zM180 663h5v1h-5zM186 663h5v1h-5zM200 663h1v1h-1zM922 663h2v1h-2zM1046 663h2v1h-2zM168 664h1v1h-1zM201 664h1v1h-1zM920 664h2v1h-2zM1044 664h2v1h-2zM167 665h1v1h-1zM202 665h1v1h-1zM918 665h2v1h-2zM1042 665h2v1h-2zM166 666h1v1h-1zM203 666h1v1h-1zM916 666h2v1h-2zM1040 666h2v1h-2zM166 667h1v1h-1zM203 667h1v1h-1zM914 667h2v1h-2zM1038 667h2v1h-2zM912 668h2v1h-2zM1036 668h2v1h-2zM910 669h2v1h-2zM1034 669h2v1h-2zM908 670h2v1h-2zM1032 670h2v1h-2zM907 671h2v1h-2zM1031 671h2v1h-2zM909 672h2v1h-2zM1033 672h2v1h-2zM558 673h1v1h-1zM595 673h1v1h-1zM911 673h2v1h-2zM1035 673h2v1h-2zM558 674h1v1h-1zM595 674h1v1h-1zM913 674h2v1h-2zM1037 674h2v1h-2zM559 675h1v1h-1zM594 675h1v1h-1zM915 675h2v1h-2zM1039 675h2v1h-2zM560 676h1v1h-1zM593 676h1v1h-1zM917 676h2v1h-2zM1041 676h2v1h-2zM561 677h1v1h-1zM592 677h1v1h-1zM919 677h2v1h-2zM1043 677h2v1h-2zM561 678h1v1h-1zM592 678h1v1h-1zM921 678h2v1h-2zM1045 678h2v1h-2zM562 679h1v1h-1zM572 679h11v1h-11zM591 679h1v1h-1zM923 679h2v1h-2zM1047 679h2v1h-2zM563 680h2v1h-2zM589 680h2v1h-2zM925 680h2v1h-2zM1049 680h2v1h-2zM565 681h1v1h-1zM588 681h1v1h-1zM927 681h2v1h-2zM1051 681h2v1h-2zM566 682h2v1h-2zM586 682h2v1h-2zM926 682h2v1h-2zM1050 682h2v1h-2zM166 683h1v1h-1zM203 683h1v1h-1zM568 683h1v1h-1zM585 683h1v1h-1zM924 683h2v1h-2zM1048 683h2v1h-2zM166 684h1v1h-1zM203 684h1v1h-1zM569 684h5v1h-5zM580 684h5v1h-5zM922 684h2v1h-2zM1046 684h2v1h-2zM167 685h1v1h-1zM202 685h1v1h-1zM574 685h3v1h-3zM578 685h2v1h-2zM920 685h2v1h-2zM1044 685h2v1h-2zM168 686h1v1h-1zM201 686h1v1h-1zM918 686h2v1h-2zM1042 686h2v1h-2zM169 687h1v1h-1zM200 687h1v1h-1zM916 687h2v1h-2zM1040 687h2v1h-2zM169 688h1v1h-1zM200 688h1v1h-1zM914 688h2v1h-2zM1038 688h2v1h-2zM170 689h1v1h-1zM180 689h11v1h-11zM199 689h1v1h-1zM912 689h2v1h-2zM1036 689h2v1h-2zM171 690h2v1h-2zM197 690h2v1h-2zM910 690h2v1h-2zM1034 690h2v1h-2zM173 691h1v1h-1zM196 691h1v1h-1zM908 691h2v1h-2zM1032 691h2v1h-2zM174 692h2v1h-2zM194 692h2v1h-2zM907 692h2v1h-2zM1031 692h2v1h-2zM176 693h1v1h-1zM193 693h1v1h-1zM909 693h3v1h-3zM1033 693h3v1h-3zM177 694h5v1h-5zM188 694h5v1h-5zM912 694h2v1h-2zM1036 694h2v1h-2zM182 695h3v1h-3zM186 695h2v1h-2zM914 695h3v1h-3zM1038 695h3v1h-3zM917 696h1v1h-1zM1041 696h1v1h-1zM127 734h1v1h-1zM261 734h1v1h-1zM916 734h2v1h-2zM1040 734h2v1h-2zM128 735h2v1h-2zM262 735h2v1h-2zM915 735h1v1h-1zM1039 735h1v1h-1zM130 736h1v1h-1zM264 736h1v1h-1zM913 736h2v1h-2zM1037 736h2v1h-2zM131 737h2v1h-2zM265 737h2v1h-2zM911 737h2v1h-2zM1035 737h2v1h-2zM133 738h1v1h-1zM267 738h1v1h-1zM910 738h1v1h-1zM1034 738h1v1h-1zM134 739h1v1h-1zM268 739h1v1h-1zM908 739h2v1h-2zM1032 739h2v1h-2zM135 740h2v1h-2zM269 740h2v1h-2zM907 740h1v1h-1zM1031 740h1v1h-1zM137 741h1v1h-1zM271 741h1v1h-1zM905 741h2v1h-2zM1029 741h2v1h-2zM138 742h2v1h-2zM272 742h2v1h-2zM903 742h2v1h-2zM1027 742h2v1h-2zM115 743h11v1h-11zM140 743h1v1h-1zM142 743h11v1h-11zM249 743h11v1h-11zM274 743h1v1h-1zM276 743h11v1h-11zM902 743h1v1h-1zM1026 743h1v1h-1zM140 744h1v1h-1zM274 744h1v1h-1zM900 744h2v1h-2zM1024 744h2v1h-2zM138 745h2v1h-2zM272 745h2v1h-2zM899 745h1v1h-1zM1023 745h1v1h-1zM137 746h1v1h-1zM271 746h1v1h-1zM897 746h2v1h-2zM1021 746h2v1h-2zM135 747h2v1h-2zM269 747h2v1h-2zM896 747h1v1h-1zM1020 747h1v1h-1zM134 748h1v1h-1zM268 748h1v1h-1zM894 748h2v1h-2zM1018 748h2v1h-2zM133 749h1v1h-1zM267 749h1v1h-1zM892 749h2v1h-2zM1016 749h2v1h-2zM131 750h2v1h-2zM265 750h2v1h-2zM891 750h1v1h-1zM1015 750h1v1h-1zM130 751h1v1h-1zM264 751h1v1h-1zM889 751h2v1h-2zM1013 751h2v1h-2zM128 752h2v1h-2zM262 752h2v1h-2zM888 752h1v1h-1zM1012 752h1v1h-1zM127 753h1v1h-1zM261 753h1v1h-1zM536 753h1v1h-1zM556 753h1v1h-1zM825 753h1v1h-1zM845 753h1v1h-1zM536 754h1v1h-1zM556 754h2v1h-2zM653 754h1v1h-1zM825 754h1v1h-1zM845 754h2v1h-2zM535 755h1v1h-1zM537 755h1v1h-1zM555 755h1v1h-1zM557 755h1v1h-1zM654 755h2v1h-2zM824 755h1v1h-1zM826 755h1v1h-1zM844 755h1v1h-1zM846 755h1v1h-1zM535 756h1v1h-1zM537 756h1v1h-1zM555 756h1v1h-1zM558 756h1v1h-1zM656 756h1v1h-1zM824 756h1v1h-1zM826 756h1v1h-1zM844 756h1v1h-1zM847 756h1v1h-1zM534 757h1v1h-1zM538 757h1v1h-1zM554 757h1v1h-1zM558 757h1v1h-1zM657 757h2v1h-2zM823 757h1v1h-1zM827 757h1v1h-1zM843 757h1v1h-1zM847 757h1v1h-1zM534 758h1v1h-1zM538 758h1v1h-1zM554 758h1v1h-1zM559 758h1v1h-1zM659 758h1v1h-1zM823 758h1v1h-1zM827 758h1v1h-1zM843 758h1v1h-1zM848 758h1v1h-1zM533 759h1v1h-1zM539 759h1v1h-1zM553 759h1v1h-1zM559 759h1v1h-1zM660 759h1v1h-1zM822 759h1v1h-1zM828 759h1v1h-1zM842 759h1v1h-1zM848 759h1v1h-1zM533 760h1v1h-1zM539 760h1v1h-1zM553 760h1v1h-1zM560 760h1v1h-1zM661 760h2v1h-2zM822 760h1v1h-1zM828 760h1v1h-1zM842 760h1v1h-1zM849 760h1v1h-1zM532 761h1v1h-1zM540 761h1v1h-1zM552 761h1v1h-1zM560 761h1v1h-1zM663 761h1v1h-1zM821 761h1v1h-1zM829 761h1v1h-1zM841 761h1v1h-1zM849 761h1v1h-1zM532 762h1v1h-1zM540 762h1v1h-1zM552 762h1v1h-1zM561 762h1v1h-1zM664 762h2v1h-2zM821 762h1v1h-1zM829 762h1v1h-1zM841 762h1v1h-1zM850 762h1v1h-1zM528 763h4v1h-4zM541 763h1v1h-1zM551 763h1v1h-1zM561 763h1v1h-1zM572 763h5v1h-5zM641 763h11v1h-11zM666 763h1v1h-1zM668 763h11v1h-11zM817 763h4v1h-4zM830 763h1v1h-1zM840 763h1v1h-1zM850 763h1v1h-1zM861 763h5v1h-5zM878 763h9v1h-9zM1002 763h9v1h-9zM541 764h1v1h-1zM551 764h1v1h-1zM562 764h1v1h-1zM572 764h1v1h-1zM666 764h1v1h-1zM830 764h1v1h-1zM840 764h1v1h-1zM851 764h1v1h-1zM861 764h1v1h-1zM542 765h1v1h-1zM550 765h1v1h-1zM562 765h1v1h-1zM571 765h1v1h-1zM664 765h2v1h-2zM831 765h1v1h-1zM839 765h1v1h-1zM851 765h1v1h-1zM860 765h1v1h-1zM542 766h1v1h-1zM550 766h1v1h-1zM563 766h1v1h-1zM571 766h1v1h-1zM663 766h1v1h-1zM831 766h1v1h-1zM839 766h1v1h-1zM852 766h1v1h-1zM860 766h1v1h-1zM543 767h1v1h-1zM549 767h1v1h-1zM563 767h1v1h-1zM570 767h1v1h-1zM661 767h2v1h-2zM832 767h1v1h-1zM838 767h1v1h-1zM852 767h1v1h-1zM859 767h1v1h-1zM543 768h1v1h-1zM549 768h1v1h-1zM564 768h1v1h-1zM570 768h1v1h-1zM660 768h1v1h-1zM832 768h1v1h-1zM838 768h1v1h-1zM853 768h1v1h-1zM859 768h1v1h-1zM544 769h1v1h-1zM548 769h1v1h-1zM564 769h1v1h-1zM569 769h1v1h-1zM659 769h1v1h-1zM833 769h1v1h-1zM837 769h1v1h-1zM853 769h1v1h-1zM858 769h1v1h-1zM544 770h1v1h-1zM548 770h1v1h-1zM565 770h1v1h-1zM569 770h1v1h-1zM657 770h2v1h-2zM833 770h1v1h-1zM837 770h1v1h-1zM854 770h1v1h-1zM858 770h1v1h-1zM545 771h1v1h-1zM547 771h1v1h-1zM565 771h1v1h-1zM568 771h1v1h-1zM656 771h1v1h-1zM834 771h1v1h-1zM836 771h1v1h-1zM854 771h1v1h-1zM857 771h1v1h-1zM545 772h1v1h-1zM547 772h1v1h-1zM566 772h1v1h-1zM568 772h1v1h-1zM654 772h2v1h-2zM834 772h1v1h-1zM836 772h1v1h-1zM855 772h1v1h-1zM857 772h1v1h-1zM546 773h1v1h-1zM566 773h2v1h-2zM653 773h1v1h-1zM835 773h1v1h-1zM855 773h2v1h-2zM546 774h1v1h-1zM567 774h1v1h-1zM835 774h1v1h-1zM856 774h1v1h-1zM888 775h1v1h-1zM1012 775h1v1h-1zM889 776h2v1h-2zM1013 776h2v1h-2zM891 777h1v1h-1zM1015 777h1v1h-1zM892 778h1v1h-1zM1016 778h1v1h-1zM893 779h2v1h-2zM1017 779h2v1h-2zM754 780h2v1h-2zM895 780h1v1h-1zM1019 780h1v1h-1zM756 781h2v1h-2zM896 781h2v1h-2zM1020 781h2v1h-2zM758 782h2v1h-2zM898 782h1v1h-1zM905 782h1v1h-1zM1022 782h1v1h-1zM1029 782h1v1h-1zM760 783h2v1h-2zM899 783h1v1h-1zM904 783h1v1h-1zM906 783h1v1h-1zM1023 783h1v1h-1zM1028 783h1v1h-1zM1030 783h1v1h-1zM762 784h2v1h-2zM900 784h2v1h-2zM903 784h1v1h-1zM907 784h1v1h-1zM1024 784h2v1h-2zM1027 784h1v1h-1zM1031 784h1v1h-1zM761 785h2v1h-2zM902 785h1v1h-1zM908 785h1v1h-1zM1026 785h1v1h-1zM1032 785h1v1h-1zM759 786h2v1h-2zM901 786h1v1h-1zM909 786h1v1h-1zM1025 786h1v1h-1zM1033 786h1v1h-1zM757 787h2v1h-2zM900 787h2v1h-2zM910 787h1v1h-1zM1024 787h2v1h-2zM1034 787h1v1h-1zM755 788h2v1h-2zM902 788h2v1h-2zM911 788h2v1h-2zM1026 788h2v1h-2zM1035 788h2v1h-2zM753 789h2v1h-2zM904 789h3v1h-3zM913 789h1v1h-1zM1028 789h3v1h-3zM1037 789h1v1h-1zM751 790h2v1h-2zM907 790h3v1h-3zM914 790h1v1h-1zM1031 790h3v1h-3zM1038 790h1v1h-1zM749 791h2v1h-2zM910 791h2v1h-2zM915 791h1v1h-1zM1034 791h2v1h-2zM1039 791h1v1h-1zM747 792h2v1h-2zM912 792h3v1h-3zM916 792h1v1h-1zM1036 792h3v1h-3zM1040 792h1v1h-1zM745 793h2v1h-2zM915 793h3v1h-3zM1039 793h3v1h-3zM743 794h2v1h-2zM917 794h1v1h-1zM1041 794h1v1h-1zM742 795h2v1h-2zM744 796h2v1h-2zM746 797h2v1h-2zM748 798h2v1h-2zM750 799h2v1h-2zM752 800h2v1h-2zM754 801h2v1h-2zM756 802h2v1h-2zM758 803h2v1h-2zM760 804h2v1h-2zM762 805h2v1h-2zM761 806h2v1h-2zM759 807h2v1h-2zM757 808h2v1h-2zM755 809h2v1h-2zM753 810h2v1h-2zM751 811h2v1h-2zM749 812h2v1h-2zM701 813h10v1h-10zM712 813h11v1h-11zM747 813h2v1h-2zM745 814h2v1h-2zM743 815h2v1h-2zM742 816h2v1h-2zM744 817h3v1h-3zM701 818h10v1h-10zM712 818h11v1h-11zM747 818h2v1h-2zM749 819h3v1h-3zM752 820h1v1h-1z"/>
<path fill="#0000ff" d="M61 660h1v12h-1zM99 657h1v7h-1zM100 657h1v7h-1zM101 657h1v7h-1zM102 598h1v146h-1zM103 657h1v7h-1zM104 657h1v7h-1zM105 657h1v7h-1zM182 595h1v7h-1zM182 740h1v7h-1zM183 595h1v7h-1zM183 740h1v7h-1zM184 595h1v7h-1zM184 740h1v7h-1zM185 595h1v57h-1zM185 702h1v45h-1zM186 595h1v7h-1zM186 740h1v7h-1zM187 595h1v7h-1zM187 740h1v7h-1zM188 595h1v7h-1zM188 740h1v7h-1zM234 595h1v7h-1zM235 595h1v7h-1zM236 595h1v7h-1zM237 595h1v231h-1zM238 595h1v7h-1zM239 595h1v7h-1zM240 595h1v7h-1zM295 595h1v7h-1zM296 595h1v7h-1zM297 595h1v7h-1zM298 595h1v149h-1zM299 595h1v7h-1zM300 595h1v7h-1zM301 595h1v7h-1zM326 595h1v7h-1zM327 595h1v7h-1zM328 595h1v7h-1zM329 595h1v37h-1zM329 671h1v11h-1zM330 595h1v7h-1zM331 595h1v7h-1zM332 595h1v7h-1zM381 763h1v63h-1zM391 598h1v13h-1zM391 660h1v22h-1zM568 604h1v36h-1zM586 604h1v36h-1zM708 760h1v7h-1zM709 760h1v7h-1zM710 760h1v7h-1zM711 760h1v36h-1zM712 760h1v7h-1zM713 760h1v7h-1zM714 760h1v7h-1zM750 760h1v7h-1zM751 760h1v7h-1zM752 760h1v7h-1zM753 760h1v16h-1zM753 825h1v12h-1zM754 760h1v7h-1zM755 760h1v7h-1zM756 760h1v7h-1zM908 614h1v36h-1zM915 719h1v7h-1zM916 719h1v7h-1zM917 719h1v7h-1zM918 701h1v33h-1zM918 794h1v53h-1zM919 719h1v7h-1zM920 719h1v7h-1zM921 719h1v7h-1zM926 614h1v36h-1zM969 722h1v42h-1zM1032 614h1v36h-1zM1042 701h1v33h-1zM1042 794h1v53h-1zM1050 614h1v36h-1zM577 595h1v1h-1zM576 596h1v1h-1zM578 596h1v1h-1zM575 597h1v1h-1zM579 597h1v1h-1zM103 598h12v1h-12zM153 598h29v1h-29zM189 598h45v1h-45zM241 598h8v1h-8zM287 598h8v1h-8zM302 598h24v1h-24zM333 598h58v1h-58zM574 598h1v1h-1zM580 598h1v1h-1zM573 599h1v1h-1zM581 599h1v1h-1zM572 600h1v1h-1zM582 600h1v1h-1zM571 601h1v1h-1zM583 601h1v1h-1zM570 602h1v1h-1zM584 602h1v1h-1zM569 603h1v1h-1zM585 603h1v1h-1zM917 605h1v1h-1zM1041 605h1v1h-1zM916 606h1v1h-1zM918 606h1v1h-1zM1040 606h1v1h-1zM1042 606h1v1h-1zM915 607h1v1h-1zM919 607h1v1h-1zM1039 607h1v1h-1zM1043 607h1v1h-1zM914 608h1v1h-1zM920 608h1v1h-1zM1038 608h1v1h-1zM1044 608h1v1h-1zM913 609h1v1h-1zM921 609h1v1h-1zM1037 609h1v1h-1zM1045 609h1v1h-1zM912 610h1v1h-1zM922 610h1v1h-1zM1036 610h1v1h-1zM1046 610h1v1h-1zM911 611h1v1h-1zM923 611h1v1h-1zM1035 611h1v1h-1zM1047 611h1v1h-1zM910 612h1v1h-1zM924 612h1v1h-1zM1034 612h1v1h-1zM1048 612h1v1h-1zM909 613h1v1h-1zM925 613h1v1h-1zM1033 613h1v1h-1zM1049 613h1v1h-1zM569 639h17v1h-17zM909 649h17v1h-17zM1033 649h17v1h-17zM62 660h37v1h-37zM50 671h11v1h-11zM62 671h12v1h-12zM51 672h1v1h-1zM72 672h1v1h-1zM52 673h1v1h-1zM71 673h1v1h-1zM53 674h1v1h-1zM70 674h1v1h-1zM54 675h1v1h-1zM69 675h1v1h-1zM55 676h1v1h-1zM68 676h1v1h-1zM55 677h1v1h-1zM67 677h1v1h-1zM56 678h1v1h-1zM66 678h1v1h-1zM57 679h1v1h-1zM65 679h1v1h-1zM58 680h1v1h-1zM64 680h1v1h-1zM59 681h1v1h-1zM63 681h1v1h-1zM318 681h11v1h-11zM330 681h12v1h-12zM380 681h11v1h-11zM392 681h12v1h-12zM60 682h1v1h-1zM62 682h1v1h-1zM319 682h1v1h-1zM340 682h1v1h-1zM381 682h1v1h-1zM402 682h1v1h-1zM61 683h1v1h-1zM320 683h1v1h-1zM339 683h1v1h-1zM382 683h1v1h-1zM401 683h1v1h-1zM321 684h1v1h-1zM338 684h1v1h-1zM383 684h1v1h-1zM400 684h1v1h-1zM322 685h1v1h-1zM337 685h1v1h-1zM384 685h1v1h-1zM399 685h1v1h-1zM323 686h1v1h-1zM336 686h1v1h-1zM385 686h1v1h-1zM398 686h1v1h-1zM323 687h1v1h-1zM335 687h1v1h-1zM385 687h1v1h-1zM397 687h1v1h-1zM324 688h1v1h-1zM334 688h1v1h-1zM386 688h1v1h-1zM396 688h1v1h-1zM325 689h1v1h-1zM333 689h1v1h-1zM387 689h1v1h-1zM395 689h1v1h-1zM326 690h1v1h-1zM332 690h1v1h-1zM388 690h1v1h-1zM394 690h1v1h-1zM327 691h1v1h-1zM331 691h1v1h-1zM389 691h1v1h-1zM393 691h1v1h-1zM566 691h24v1h-24zM328 692h1v1h-1zM330 692h1v1h-1zM390 692h1v1h-1zM392 692h1v1h-1zM567 692h1v1h-1zM588 692h1v1h-1zM329 693h1v1h-1zM391 693h1v1h-1zM568 693h1v1h-1zM587 693h1v1h-1zM569 694h1v1h-1zM586 694h1v1h-1zM570 695h1v1h-1zM585 695h1v1h-1zM571 696h1v1h-1zM584 696h1v1h-1zM571 697h1v1h-1zM583 697h1v1h-1zM572 698h1v1h-1zM582 698h1v1h-1zM573 699h1v1h-1zM581 699h1v1h-1zM574 700h1v1h-1zM580 700h1v1h-1zM575 701h1v1h-1zM579 701h1v1h-1zM576 702h1v1h-1zM578 702h1v1h-1zM577 703h1v1h-1zM922 722h47v1h-47zM103 743h12v1h-12zM153 743h29v1h-29zM189 743h48v1h-48zM238 743h11v1h-11zM287 743h11v1h-11zM382 763h146v1h-146zM577 763h64v1h-64zM679 763h29v1h-29zM715 763h35v1h-35zM757 763h60v1h-60zM866 763h12v1h-12zM970 763h32v1h-32zM238 825h143v1h-143zM700 836h24v1h-24zM741 836h12v1h-12zM754 836h11v1h-11zM701 837h1v1h-1zM722 837h1v1h-1zM742 837h1v1h-1zM763 837h1v1h-1zM702 838h1v1h-1zM721 838h1v1h-1zM743 838h1v1h-1zM762 838h1v1h-1zM703 839h1v1h-1zM720 839h1v1h-1zM744 839h1v1h-1zM761 839h1v1h-1zM704 840h1v1h-1zM719 840h1v1h-1zM745 840h1v1h-1zM760 840h1v1h-1zM705 841h1v1h-1zM718 841h1v1h-1zM746 841h1v1h-1zM759 841h1v1h-1zM705 842h1v1h-1zM717 842h1v1h-1zM747 842h1v1h-1zM758 842h1v1h-1zM706 843h1v1h-1zM716 843h1v1h-1zM748 843h1v1h-1zM758 843h1v1h-1zM707 844h1v1h-1zM715 844h1v1h-1zM749 844h1v1h-1zM757 844h1v1h-1zM708 845h1v1h-1zM714 845h1v1h-1zM750 845h1v1h-1zM756 845h1v1h-1zM709 846h1v1h-1zM713 846h1v1h-1zM751 846h1v1h-1zM755 846h1v1h-1zM906 846h12v1h-12zM919 846h11v1h-11zM1030 846h12v1h-12zM1043 846h11v1h-11zM710 847h1v1h-1zM712 847h1v1h-1zM752 847h1v1h-1zM754 847h1v1h-1zM907 847h1v1h-1zM928 847h1v1h-1zM1031 847h1v1h-1zM1052 847h1v1h-1zM711 848h1v1h-1zM753 848h1v1h-1zM908 848h1v1h-1zM927 848h1v1h-1zM1032 848h1v1h-1zM1051 848h1v1h-1zM909 849h1v1h-1zM926 849h1v1h-1zM1033 849h1v1h-1zM1050 849h1v1h-1zM910 850h1v1h-1zM925 850h1v1h-1zM1034 850h1v1h-1zM1049 850h1v1h-1zM911 851h1v1h-1zM924 851h1v1h-1zM1035 851h1v1h-1zM1048 851h1v1h-1zM912 852h1v1h-1zM923 852h1v1h-1zM1036 852h1v1h-1zM1047 852h1v1h-1zM913 853h1v1h-1zM923 853h1v1h-1zM1037 853h1v1h-1zM1047 853h1v1h-1zM914 854h1v1h-1zM922 854h1v1h-1zM1038 854h1v1h-1zM1046 854h1v1h-1zM915 855h1v1h-1zM921 855h1v1h-1zM1039 855h1v1h-1zM1045 855h1v1h-1zM916 856h1v1h-1zM920 856h1v1h-1zM1040 856h1v1h-1zM1044 856h1v1h-1zM917 857h1v1h-1zM919 857h1v1h-1zM1041 857h1v1h-1zM1043 857h1v1h-1zM918 858h1v1h-1zM1042 858h1v1h-1z"/>
</g>
<g font-family="Liberation Sans" font-size="15" font-weight="bold" fill="#000">
<text x="122.25" y="584" textLength="18.72" lengthAdjust="spacingAndGlyphs">D4</text>
<text x="106.46" y="623" textLength="50.21" lengthAdjust="spacingAndGlyphs">1N4001</text>
<text x="172.31" y="594" textLength="26.02" lengthAdjust="spacingAndGlyphs">V1A</text>
<text x="256.25" y="584" textLength="19.80" lengthAdjust="spacingAndGlyphs">D2</text>
<text x="241.20" y="623" textLength="49.67" lengthAdjust="spacingAndGlyphs">1N4001</text>
<text x="338.36" y="594" textLength="22.95" lengthAdjust="spacingAndGlyphs">VM</text>
<text x="334.99" y="640" textLength="19.26" lengthAdjust="spacingAndGlyphs">C2</text>
<text x="334.15" y="669" textLength="41.30" lengthAdjust="spacingAndGlyphs">6800µ</text>
<text x="403.46" y="629" textLength="18.81" lengthAdjust="spacingAndGlyphs">R5</text>
<text x="404.36" y="652" textLength="26.71" lengthAdjust="spacingAndGlyphs">17R</text>
<text x="199.78" y="655" textLength="16.18" lengthAdjust="spacingAndGlyphs">V1</text>
<text x="200.15" y="707" textLength="161.03" lengthAdjust="spacingAndGlyphs">SINE(0 36 50 0 0 0 10.5)</text>
<text x="123.20" y="728" textLength="18.72" lengthAdjust="spacingAndGlyphs">D5</text>
<text x="107.20" y="767" textLength="49.94" lengthAdjust="spacingAndGlyphs">1N4001</text>
<text x="170.99" y="757" textLength="27.28" lengthAdjust="spacingAndGlyphs">V1B</text>
<text x="256.46" y="729" textLength="19.35" lengthAdjust="spacingAndGlyphs">D3</text>
<text x="240.83" y="767" textLength="50.21" lengthAdjust="spacingAndGlyphs">1N4001</text>
<text x="593.52" y="645" textLength="15.82" lengthAdjust="spacingAndGlyphs">V2</text>
<text x="592.20" y="695" textLength="8.52" lengthAdjust="spacingAndGlyphs">5</text>
<text x="540.41" y="749" textLength="19.17" lengthAdjust="spacingAndGlyphs">R6</text>
<text x="541.41" y="788" textLength="16.96" lengthAdjust="spacingAndGlyphs">5k</text>
<text x="649.25" y="749" textLength="19.62" lengthAdjust="spacingAndGlyphs">D1</text>
<text x="633.99" y="788" textLength="49.58" lengthAdjust="spacingAndGlyphs">1N4001</text>
<text x="715.99" y="805" textLength="18.54" lengthAdjust="spacingAndGlyphs">C1</text>
<text x="715.99" y="836" textLength="25.42" lengthAdjust="spacingAndGlyphs">10µ</text>
<text x="764.20" y="794" textLength="19.17" lengthAdjust="spacingAndGlyphs">R1</text>
<text x="764.20" y="818" textLength="24.22" lengthAdjust="spacingAndGlyphs">1k5</text>
<text x="772.99" y="717" textLength="54.58" lengthAdjust="spacingAndGlyphs">.tran 0.4</text>
<text x="772.99" y="758.5" textLength="42.80" lengthAdjust="spacingAndGlyphs">signal</text>
<text x="829.62" y="749" textLength="18.99" lengthAdjust="spacingAndGlyphs">R3</text>
<text x="828.20" y="788" textLength="22.87" lengthAdjust="spacingAndGlyphs">10k</text>
<text x="892.20" y="727" textLength="23.31" lengthAdjust="spacingAndGlyphs">out</text>
<text x="913.20" y="758.5" textLength="18.94" lengthAdjust="spacingAndGlyphs">Q1</text>
<text x="912.20" y="781" textLength="50.75" lengthAdjust="spacingAndGlyphs">2N3904</text>
<text x="930.46" y="670" textLength="19.89" lengthAdjust="spacingAndGlyphs">R2</text>
<text x="930.46" y="694" textLength="23.95" lengthAdjust="spacingAndGlyphs">10k</text>
<text x="1055.20" y="670" textLength="18.99" lengthAdjust="spacingAndGlyphs">R4</text>
<text x="1055.20" y="694" textLength="23.95" lengthAdjust="spacingAndGlyphs">10k</text>
<text x="1035.78" y="758.5" textLength="20.74" lengthAdjust="spacingAndGlyphs">Q2</text>
<text x="1035.15" y="781" textLength="50.93" lengthAdjust="spacingAndGlyphs">2N3904</text>
<text transform="translate(582.3,621) rotate(-90)" x="0" y="0" text-anchor="middle" font-size="16" font-weight="normal" stroke="#000" stroke-width="0.35">VCC</text>
<text transform="translate(922.8,631.3) rotate(-90)" x="0" y="0" text-anchor="middle" font-size="16" font-weight="normal" stroke="#000" stroke-width="0.35">VCC</text>
<text transform="translate(1046.8,631.3) rotate(-90)" x="0" y="0" text-anchor="middle" font-size="16" font-weight="normal" stroke="#000" stroke-width="0.35">VCC</text>
<text transform="translate(1038.1,722.3) rotate(-90)" x="0" y="0" text-anchor="middle" font-size="16">out2</text>
</g>
</svg></body></html>
